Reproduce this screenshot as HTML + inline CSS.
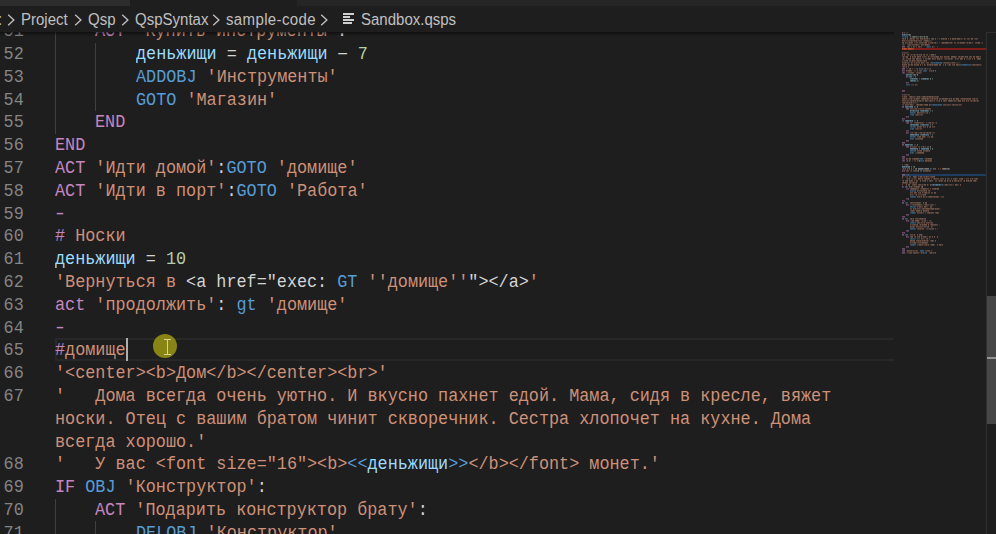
<!DOCTYPE html>
<html><head><meta charset="utf-8">
<style>
html,body{margin:0;padding:0;}
body{width:996px;height:534px;overflow:hidden;background:#1e1e1e;position:relative;font-family:"Liberation Sans",sans-serif;}
#tabs{position:absolute;left:0;top:0;width:996px;height:6px;background:#252526;}
#tabin{position:absolute;left:0;top:0;width:130px;height:6px;background:#2d2d2d;}
#tabact{position:absolute;left:130px;top:0;width:167px;height:6px;background:#1e1e1e;}
#crumbs{position:absolute;left:0;top:6px;width:996px;height:25.6px;background:#1e1e1e;z-index:5;}
.bc{position:absolute;top:0.5px;font-size:15.8px;transform:scaleX(0.95);transform-origin:0 0;line-height:25.6px;color:#c0c0c0;white-space:pre;}
.chev{position:absolute;top:7.6px;margin-left:-0.8px;}
#shadow{position:absolute;left:0;top:31.6px;width:894px;height:4px;background:linear-gradient(rgba(0,0,0,0.5),rgba(0,0,0,0));z-index:4;}
#editor{position:absolute;left:0;top:0;width:996px;height:534px;overflow:hidden;}
.ln{position:absolute;left:0;width:26.2px;text-align:right;transform:scaleX(0.9081);transform-origin:0 0;font-family:"Liberation Mono",monospace;font-size:18.5px;line-height:22.8px;height:22.8px;color:#858585;white-space:pre;}
.cl{position:absolute;transform:scaleX(0.9081);transform-origin:0 0;font-family:"Liberation Mono",monospace;font-size:18.5px;line-height:22.8px;height:22.8px;white-space:pre;}
.ig{position:absolute;width:1px;background:#404040;}
#curline{position:absolute;left:55px;top:338px;width:839px;height:23px;border:2px solid #282828;border-right:none;box-sizing:border-box;}
.dash{font-weight:normal;display:inline-block;transform:scaleX(1.38);}
#cursor{position:absolute;left:126px;top:338px;width:2px;height:23px;background:#aeafad;}
#mouse{position:absolute;left:153px;top:334px;width:24px;height:24px;border-radius:50%;background:#898515;}
#minimap{position:absolute;left:902px;top:0;width:84px;height:534px;}
#minimap i{position:absolute;height:2px;opacity:0.55;}
#vscroll{position:absolute;left:986px;top:32px;width:10px;height:502px;border-left:1px solid #303030;border-top:1px solid #303030;box-sizing:border-box;}
#slider{position:absolute;left:987px;top:296px;width:9px;height:128px;background:#464646;}
#marker{position:absolute;left:987px;top:356.5px;width:9px;height:2px;background:#939393;}
</style></head><body>
<div id="tabs"></div><div id="tabin"></div><div id="tabact"></div>
<div id="editor">
<div id="curline"></div>
<div class="ig" style="left:55.00px;top:31.60px;height:102.10px"></div>
<div class="ig" style="left:95.32px;top:42.50px;height:68.40px"></div>
<div class="ig" style="left:55.00px;top:498.50px;height:35.50px"></div>
<div class="ig" style="left:95.32px;top:521.30px;height:12.70px"></div>
<div class="ln" style="top:21px">51</div>
<div class="cl" style="top:21px;left:95.32px"><span style="color:#c586c0">ACT</span><span style="color:#d4d4d4"> </span><span style="color:#ce9178">&#x27;Купить инструменты&#x27;</span><span style="color:#d4d4d4">:</span></div>
<div class="ln" style="top:44px">52</div>
<div class="cl" style="top:44px;left:135.64px"><span style="color:#9cdcfe">деньжищи</span><span style="color:#d4d4d4"> = </span><span style="color:#9cdcfe">деньжищи</span><span style="color:#d4d4d4"> <b class="dash"><b class="dash">-</b></b> </span><span style="color:#b5cea8">7</span></div>
<div class="ln" style="top:67px">53</div>
<div class="cl" style="top:67px;left:135.64px"><span style="color:#569cd6">ADDOBJ</span><span style="color:#d4d4d4"> </span><span style="color:#ce9178">&#x27;Инструменты&#x27;</span></div>
<div class="ln" style="top:90px">54</div>
<div class="cl" style="top:90px;left:135.64px"><span style="color:#569cd6">GOTO</span><span style="color:#d4d4d4"> </span><span style="color:#ce9178">&#x27;Магазин&#x27;</span></div>
<div class="ln" style="top:112px">55</div>
<div class="cl" style="top:112px;left:95.32px"><span style="color:#c586c0">END</span></div>
<div class="ln" style="top:135px">56</div>
<div class="cl" style="top:135px;left:55.00px"><span style="color:#c586c0">END</span></div>
<div class="ln" style="top:158px">57</div>
<div class="cl" style="top:158px;left:55.00px"><span style="color:#c586c0">ACT</span><span style="color:#d4d4d4"> </span><span style="color:#ce9178">&#x27;Идти домой&#x27;</span><span style="color:#d4d4d4">:</span><span style="color:#569cd6">GOTO</span><span style="color:#d4d4d4"> </span><span style="color:#ce9178">&#x27;домище&#x27;</span></div>
<div class="ln" style="top:181px">58</div>
<div class="cl" style="top:181px;left:55.00px"><span style="color:#c586c0">ACT</span><span style="color:#d4d4d4"> </span><span style="color:#ce9178">&#x27;Идти в порт&#x27;</span><span style="color:#d4d4d4">:</span><span style="color:#569cd6">GOTO</span><span style="color:#d4d4d4"> </span><span style="color:#ce9178">&#x27;Работа&#x27;</span></div>
<div class="ln" style="top:204px">59</div>
<div class="cl" style="top:204px;left:55.00px"><span style="color:#c586c0"><b class="dash">-</b></span></div>
<div class="ln" style="top:226px">60</div>
<div class="cl" style="top:226px;left:55.00px"><span style="color:#c586c0">#</span><span style="color:#ce9178"> Носки</span></div>
<div class="ln" style="top:249px">61</div>
<div class="cl" style="top:249px;left:55.00px"><span style="color:#9cdcfe">деньжищи</span><span style="color:#d4d4d4"> = </span><span style="color:#b5cea8">10</span></div>
<div class="ln" style="top:272px">62</div>
<div class="cl" style="top:272px;left:55.00px"><span style="color:#ce9178">&#x27;Вернуться в </span><span style="color:#d4d4d4">&lt;a href=&quot;exec: </span><span style="color:#569cd6">GT</span><span style="color:#ce9178"> &#x27;&#x27;домище&#x27;&#x27;</span><span style="color:#d4d4d4">&quot;&gt;&lt;/a&gt;</span><span style="color:#ce9178">&#x27;</span></div>
<div class="ln" style="top:295px">63</div>
<div class="cl" style="top:295px;left:55.00px"><span style="color:#c586c0">act</span><span style="color:#d4d4d4"> </span><span style="color:#ce9178">&#x27;продолжить&#x27;</span><span style="color:#d4d4d4">: </span><span style="color:#569cd6">gt</span><span style="color:#d4d4d4"> </span><span style="color:#ce9178">&#x27;домище&#x27;</span></div>
<div class="ln" style="top:318px">64</div>
<div class="cl" style="top:318px;left:55.00px"><span style="color:#c586c0"><b class="dash">-</b></span></div>
<div class="ln" style="top:340px">65</div>
<div class="cl" style="top:340px;left:55.00px"><span style="color:#c586c0">#</span><span style="color:#ce9178">домище</span></div>
<div class="ln" style="top:363px">66</div>
<div class="cl" style="top:363px;left:55.00px"><span style="color:#ce9178">&#x27;&lt;center&gt;&lt;b&gt;Дом&lt;/b&gt;&lt;/center&gt;&lt;br&gt;&#x27;</span></div>
<div class="ln" style="top:386px">67</div>
<div class="cl" style="top:386px;left:55.00px"><span style="color:#ce9178">&#x27;   Дома всегда очень уютно. И вкусно пахнет едой. Мама, сидя в кресле, вяжет</span></div>
<div class="cl" style="top:409px;left:55.00px"><span style="color:#ce9178">носки. Отец с вашим братом чинит скворечник. Сестра хлопочет на кухне. Дома</span></div>
<div class="cl" style="top:432px;left:55.00px"><span style="color:#ce9178">всегда хорошо.&#x27;</span></div>
<div class="ln" style="top:454px">68</div>
<div class="cl" style="top:454px;left:55.00px"><span style="color:#ce9178">&#x27;   У вас &lt;font size=&quot;16&quot;&gt;&lt;b&gt;</span><span style="color:#569cd6">&lt;&lt;</span><span style="color:#9cdcfe">деньжищи</span><span style="color:#569cd6">&gt;&gt;</span><span style="color:#ce9178">&lt;/b&gt;&lt;/font&gt; монет.&#x27;</span></div>
<div class="ln" style="top:477px">69</div>
<div class="cl" style="top:477px;left:55.00px"><span style="color:#c586c0">IF</span><span style="color:#d4d4d4"> </span><span style="color:#569cd6">OBJ</span><span style="color:#d4d4d4"> </span><span style="color:#ce9178">&#x27;Конструктор&#x27;</span><span style="color:#d4d4d4">:</span></div>
<div class="ln" style="top:500px">70</div>
<div class="cl" style="top:500px;left:95.32px"><span style="color:#c586c0">ACT</span><span style="color:#d4d4d4"> </span><span style="color:#ce9178">&#x27;Подарить конструктор брату&#x27;</span><span style="color:#d4d4d4">:</span></div>
<div class="ln" style="top:523px">71</div>
<div class="cl" style="top:523px;left:135.64px"><span style="color:#569cd6">DELOBJ</span><span style="color:#d4d4d4"> </span><span style="color:#ce9178">&#x27;Конструктор&#x27;</span></div>
<div id="cursor"></div>
</div>
<div id="mouse"><svg width="24" height="24" viewBox="0 0 24 24" style="position:absolute;left:0;top:0"><path d="M11 5.5h7M14.5 5.5v15M11 20.5h7" stroke="#ddd38c" stroke-width="1" fill="none"/></svg></div>
<div id="minimap"><svg width="84" height="534" style="position:absolute;left:0;top:0">
<rect x="0" y="48.0" width="84" height="2" fill="#7f1d1b"/>
<rect x="0" y="174.0" width="84" height="2" fill="#1f3d62"/>
<path fill="#c586c0" fill-opacity="0.7" d="M0.0 32.2h0.90v1.4h-0.90zM0.0 46.2h0.90v1.4h-0.90zM1.0 46.2h0.90v1.4h-0.90zM2.0 46.2h0.90v1.4h-0.90zM0.0 52.2h0.72v1.4h-0.72zM0.0 68.2h0.90v1.4h-0.90zM1.0 68.2h0.90v1.4h-0.90zM2.0 68.2h0.90v1.4h-0.90zM0.0 70.2h0.90v1.4h-0.90zM1.0 72.2h0.90v1.4h-0.90zM4.0 76.2h0.90v1.4h-0.90zM5.0 76.2h0.63v1.4h-0.63zM4.0 82.2h0.90v1.4h-0.90zM0.0 90.2h0.90v1.4h-0.90zM1.0 90.2h0.90v1.4h-0.90zM2.0 90.2h0.90v1.4h-0.90zM0.0 94.2h0.72v1.4h-0.72zM0.0 106.2h0.90v1.4h-0.90zM1.0 106.2h0.90v1.4h-0.90zM4.0 108.2h0.90v1.4h-0.90zM5.0 108.2h0.90v1.4h-0.90zM6.0 108.2h0.90v1.4h-0.90zM4.0 116.2h0.90v1.4h-0.90zM6.0 116.2h0.90v1.4h-0.90zM0.0 118.2h0.90v1.4h-0.90zM5.0 122.2h0.90v1.4h-0.90zM6.0 122.2h0.90v1.4h-0.90zM4.0 132.2h0.90v1.4h-0.90zM4.0 140.2h0.90v1.4h-0.90zM6.0 140.2h0.90v1.4h-0.90zM0.0 142.2h0.90v1.4h-0.90zM1.0 142.2h0.90v1.4h-0.90zM2.0 142.2h0.90v1.4h-0.90zM0.0 144.2h0.90v1.4h-0.90zM1.0 144.2h0.90v1.4h-0.90zM4.0 146.2h0.90v1.4h-0.90zM5.0 146.2h0.90v1.4h-0.90zM6.0 146.2h0.90v1.4h-0.90zM4.0 154.2h0.90v1.4h-0.90zM6.0 154.2h0.90v1.4h-0.90zM0.0 156.2h0.90v1.4h-0.90zM1.0 156.2h0.90v1.4h-0.90zM2.0 156.2h0.90v1.4h-0.90zM1.0 158.2h0.90v1.4h-0.90zM1.0 160.2h0.90v1.4h-0.90zM0.0 170.2h0.90v1.4h-0.90zM2.0 170.2h0.90v1.4h-0.90zM0.0 174.2h0.90v1.4h-0.90zM0.0 186.2h0.90v1.4h-0.90zM6.0 198.2h0.90v1.4h-0.90zM0.0 202.2h0.90v1.4h-0.90zM1.0 202.2h0.90v1.4h-0.90zM4.0 204.2h0.90v1.4h-0.90zM4.0 214.2h0.90v1.4h-0.90zM6.0 214.2h0.90v1.4h-0.90zM1.0 216.2h0.90v1.4h-0.90zM2.0 216.2h0.90v1.4h-0.90zM0.0 218.2h0.90v1.4h-0.90zM1.0 218.2h0.90v1.4h-0.90zM4.0 220.2h0.90v1.4h-0.90zM6.0 220.2h0.90v1.4h-0.90zM5.0 230.2h0.90v1.4h-0.90zM6.0 230.2h0.90v1.4h-0.90zM0.0 232.2h0.90v1.4h-0.90zM2.0 232.2h0.90v1.4h-0.90zM0.0 234.2h0.90v1.4h-0.90zM1.0 234.2h0.90v1.4h-0.90zM4.0 236.2h0.90v1.4h-0.90zM4.0 246.2h0.90v1.4h-0.90zM6.0 246.2h0.90v1.4h-0.90zM0.0 248.2h0.90v1.4h-0.90zM1.0 248.2h0.90v1.4h-0.90zM2.0 248.2h0.90v1.4h-0.90zM1.0 250.2h0.90v1.4h-0.90zM2.0 250.2h0.90v1.4h-0.90zM0.0 252.2h0.90v1.4h-0.90zM1.0 252.2h0.90v1.4h-0.90zM2.0 252.2h0.90v1.4h-0.90z"/>
<path fill="#ce9178" fill-opacity="0.5" d="M1.6 32.2h0.90v1.4h-0.90zM0.0 38.2h0.90v1.4h-0.90zM10.0 38.2h0.90v1.4h-0.90zM12.0 38.2h0.90v1.4h-0.90zM14.0 38.2h0.90v1.4h-0.90zM15.0 38.2h0.90v1.4h-0.90zM16.0 38.2h0.90v1.4h-0.90zM19.0 38.2h0.90v1.4h-0.90zM23.0 38.2h0.90v1.4h-0.90zM24.0 38.2h0.90v1.4h-0.90zM27.0 38.2h0.90v1.4h-0.90zM29.0 38.2h0.90v1.4h-0.90zM37.0 38.2h0.90v1.4h-0.90zM40.0 38.2h0.90v1.4h-0.90zM42.0 38.2h0.90v1.4h-0.90zM43.0 38.2h0.90v1.4h-0.90zM46.0 38.2h0.90v1.4h-0.90zM52.0 38.2h0.90v1.4h-0.90zM59.0 38.2h0.90v1.4h-0.90zM65.0 38.2h0.90v1.4h-0.90zM66.0 38.2h0.90v1.4h-0.90zM67.0 38.2h0.90v1.4h-0.90zM73.0 38.2h0.90v1.4h-0.90zM74.0 38.2h0.90v1.4h-0.90zM75.0 38.2h0.90v1.4h-0.90zM1.0 40.2h0.90v1.4h-0.90zM2.0 40.2h0.90v1.4h-0.90zM4.0 40.2h0.90v1.4h-0.90zM6.0 40.2h0.90v1.4h-0.90zM7.0 40.2h0.90v1.4h-0.90zM8.0 40.2h0.90v1.4h-0.90zM10.0 40.2h0.90v1.4h-0.90zM11.0 40.2h0.90v1.4h-0.90zM13.0 40.2h0.90v1.4h-0.90zM16.0 40.2h0.90v1.4h-0.90zM17.0 40.2h0.90v1.4h-0.90zM18.0 40.2h0.90v1.4h-0.90zM19.0 40.2h0.90v1.4h-0.90zM22.0 40.2h0.90v1.4h-0.90zM26.0 40.2h0.90v1.4h-0.90zM29.0 40.2h0.54v1.4h-0.54zM0.0 42.2h0.90v1.4h-0.90zM5.0 42.2h0.90v1.4h-0.90zM8.0 42.2h0.90v1.4h-0.90zM10.0 42.2h0.90v1.4h-0.90zM14.0 42.2h0.90v1.4h-0.90zM15.0 42.2h0.90v1.4h-0.90zM17.0 42.2h0.90v1.4h-0.90zM18.0 42.2h0.90v1.4h-0.90zM19.0 42.2h0.90v1.4h-0.90zM22.0 42.2h0.90v1.4h-0.90zM26.0 42.2h0.90v1.4h-0.90zM28.0 42.2h0.90v1.4h-0.90zM29.0 42.2h0.90v1.4h-0.90zM32.0 42.2h0.90v1.4h-0.90zM42.0 42.2h0.90v1.4h-0.90zM46.0 42.2h0.90v1.4h-0.90zM47.0 42.2h0.90v1.4h-0.90zM48.0 42.2h0.90v1.4h-0.90zM52.0 42.2h0.90v1.4h-0.90zM53.0 42.2h0.90v1.4h-0.90zM55.0 42.2h0.90v1.4h-0.90zM56.0 42.2h0.90v1.4h-0.90zM59.0 42.2h0.90v1.4h-0.90zM62.0 42.2h0.90v1.4h-0.90zM70.0 42.2h0.90v1.4h-0.90zM73.0 42.2h0.90v1.4h-0.90zM74.0 42.2h0.90v1.4h-0.90zM75.0 42.2h0.90v1.4h-0.90zM80.0 42.2h0.63v1.4h-0.63zM1.0 44.2h0.90v1.4h-0.90zM6.0 44.2h0.90v1.4h-0.90zM8.0 44.2h0.90v1.4h-0.90zM10.0 44.2h0.90v1.4h-0.90zM11.0 44.2h0.90v1.4h-0.90zM12.0 44.2h0.90v1.4h-0.90zM13.0 44.2h0.90v1.4h-0.90zM15.0 44.2h0.90v1.4h-0.90zM16.0 44.2h0.90v1.4h-0.90zM20.0 44.2h0.90v1.4h-0.90zM21.0 44.2h0.90v1.4h-0.90zM26.0 44.2h0.90v1.4h-0.90zM27.0 44.2h0.90v1.4h-0.90zM5.0 46.2h0.90v1.4h-0.90zM7.0 46.2h0.90v1.4h-0.90zM9.0 46.2h0.90v1.4h-0.90zM12.0 46.2h0.90v1.4h-0.90zM14.0 46.2h0.90v1.4h-0.90zM16.0 46.2h0.90v1.4h-0.90zM19.0 46.2h0.90v1.4h-0.90zM2.6 52.2h0.90v1.4h-0.90zM5.0 54.2h0.90v1.4h-0.90zM9.0 54.2h0.90v1.4h-0.90zM17.0 54.2h0.90v1.4h-0.90zM18.0 54.2h0.90v1.4h-0.90zM21.0 54.2h0.90v1.4h-0.90zM24.0 54.2h0.90v1.4h-0.90zM25.0 54.2h0.90v1.4h-0.90zM12.0 56.2h0.90v1.4h-0.90zM17.0 56.2h0.90v1.4h-0.90zM20.0 56.2h0.90v1.4h-0.90zM22.0 56.2h0.90v1.4h-0.90zM23.0 56.2h0.90v1.4h-0.90zM29.0 56.2h0.90v1.4h-0.90zM30.0 56.2h0.90v1.4h-0.90zM31.0 56.2h0.90v1.4h-0.90zM32.0 56.2h0.90v1.4h-0.90zM33.0 56.2h0.90v1.4h-0.90zM39.0 56.2h0.90v1.4h-0.90zM40.0 56.2h0.90v1.4h-0.90zM43.0 56.2h0.90v1.4h-0.90zM44.0 56.2h0.90v1.4h-0.90zM45.0 56.2h0.90v1.4h-0.90zM56.0 56.2h0.90v1.4h-0.90zM61.0 56.2h0.90v1.4h-0.90zM64.0 56.2h0.90v1.4h-0.90zM67.0 56.2h0.90v1.4h-0.90zM69.0 56.2h0.90v1.4h-0.90zM78.0 56.2h0.90v1.4h-0.90zM4.0 58.2h0.90v1.4h-0.90zM6.0 58.2h0.90v1.4h-0.90zM7.0 58.2h0.90v1.4h-0.90zM10.0 58.2h0.90v1.4h-0.90zM12.0 58.2h0.90v1.4h-0.90zM16.0 58.2h0.90v1.4h-0.90zM17.0 58.2h0.90v1.4h-0.90zM18.0 58.2h0.90v1.4h-0.90zM21.0 58.2h0.90v1.4h-0.90zM23.0 58.2h0.90v1.4h-0.90zM24.0 58.2h0.90v1.4h-0.90zM28.0 58.2h0.90v1.4h-0.90zM31.0 58.2h0.90v1.4h-0.90zM32.0 58.2h0.90v1.4h-0.90zM33.0 58.2h0.90v1.4h-0.90zM36.0 58.2h0.90v1.4h-0.90zM39.0 58.2h0.90v1.4h-0.90zM43.0 58.2h0.90v1.4h-0.90zM44.0 58.2h0.90v1.4h-0.90zM46.0 58.2h0.90v1.4h-0.90zM50.0 58.2h0.90v1.4h-0.90zM55.0 58.2h0.90v1.4h-0.90zM56.0 58.2h0.90v1.4h-0.90zM60.0 58.2h0.90v1.4h-0.90zM67.0 58.2h0.90v1.4h-0.90zM68.0 58.2h0.90v1.4h-0.90zM70.0 58.2h0.90v1.4h-0.90zM78.0 58.2h0.90v1.4h-0.90zM0.0 60.2h0.90v1.4h-0.90zM2.0 60.2h0.90v1.4h-0.90zM3.0 60.2h0.90v1.4h-0.90zM4.0 60.2h0.90v1.4h-0.90zM7.0 60.2h0.90v1.4h-0.90zM8.0 60.2h0.90v1.4h-0.90zM11.0 60.2h0.90v1.4h-0.90zM17.0 60.2h0.90v1.4h-0.90zM19.0 60.2h0.90v1.4h-0.90zM21.0 60.2h0.90v1.4h-0.90zM23.0 60.2h0.90v1.4h-0.90zM24.0 60.2h0.90v1.4h-0.90zM0.0 62.2h0.90v1.4h-0.90zM1.0 62.2h0.90v1.4h-0.90zM2.0 62.2h0.90v1.4h-0.90zM5.0 62.2h0.90v1.4h-0.90zM6.0 62.2h0.90v1.4h-0.90zM10.0 62.2h0.90v1.4h-0.90zM12.0 62.2h0.90v1.4h-0.90zM16.0 62.2h0.90v1.4h-0.90zM17.0 62.2h0.90v1.4h-0.90zM20.0 62.2h0.90v1.4h-0.90zM21.0 62.2h0.90v1.4h-0.90zM24.0 62.2h0.90v1.4h-0.90zM25.0 62.2h0.90v1.4h-0.90zM26.0 62.2h0.90v1.4h-0.90zM41.4 62.2h0.90v1.4h-0.90zM43.4 62.2h0.90v1.4h-0.90zM44.4 62.2h0.90v1.4h-0.90zM46.4 62.2h0.90v1.4h-0.90zM47.4 62.2h0.90v1.4h-0.90zM49.4 62.2h0.90v1.4h-0.90zM51.4 62.2h0.90v1.4h-0.90zM55.4 62.2h0.90v1.4h-0.90zM1.0 64.2h0.90v1.4h-0.90zM3.0 64.2h0.90v1.4h-0.90zM7.0 64.2h0.90v1.4h-0.90zM13.0 64.2h0.90v1.4h-0.90zM14.0 64.2h0.90v1.4h-0.90zM20.0 64.2h0.90v1.4h-0.90zM26.0 64.2h0.90v1.4h-0.90zM27.0 64.2h0.90v1.4h-0.90zM29.0 64.2h0.90v1.4h-0.90zM41.0 64.2h0.90v1.4h-0.90zM48.0 64.2h0.90v1.4h-0.90zM50.0 64.2h0.90v1.4h-0.90zM51.0 64.2h0.90v1.4h-0.90zM56.0 64.2h0.90v1.4h-0.90zM57.0 64.2h0.90v1.4h-0.90zM70.4 64.2h0.90v1.4h-0.90zM76.4 64.2h0.90v1.4h-0.90zM77.4 64.2h0.90v1.4h-0.90zM78.4 64.2h0.90v1.4h-0.90zM2.0 66.2h0.90v1.4h-0.90zM10.3 68.2h0.90v1.4h-0.90zM14.3 68.2h0.90v1.4h-0.90zM25.4 68.2h0.90v1.4h-0.90zM27.4 68.2h0.90v1.4h-0.90zM28.4 68.2h0.54v1.4h-0.54zM5.3 70.2h0.90v1.4h-0.90zM9.3 70.2h0.90v1.4h-0.90zM12.3 70.2h0.90v1.4h-0.90zM17.3 70.2h0.90v1.4h-0.90zM27.0 70.2h0.90v1.4h-0.90zM6.3 72.2h0.90v1.4h-0.90zM7.3 72.2h0.90v1.4h-0.90zM8.3 72.2h0.90v1.4h-0.90zM11.3 72.2h0.90v1.4h-0.90zM14.3 72.2h0.90v1.4h-0.90zM15.3 72.2h0.90v1.4h-0.90zM16.3 72.2h0.90v1.4h-0.90zM18.3 72.2h0.90v1.4h-0.90zM10.8 84.2h0.90v1.4h-0.90zM12.8 84.2h0.90v1.4h-0.90zM13.8 84.2h0.90v1.4h-0.90zM2.6 94.2h0.90v1.4h-0.90zM6.6 94.2h0.90v1.4h-0.90zM0.0 96.2h0.90v1.4h-0.90zM3.0 96.2h0.90v1.4h-0.90zM7.0 96.2h0.90v1.4h-0.90zM10.0 96.2h0.90v1.4h-0.90zM11.0 96.2h0.90v1.4h-0.90zM12.0 96.2h0.90v1.4h-0.90zM16.0 96.2h0.90v1.4h-0.90zM20.0 96.2h0.90v1.4h-0.90zM23.0 96.2h0.90v1.4h-0.90zM24.0 96.2h0.90v1.4h-0.90zM26.0 96.2h0.90v1.4h-0.90zM29.0 96.2h0.90v1.4h-0.90zM31.0 96.2h0.90v1.4h-0.90zM32.0 96.2h0.90v1.4h-0.90zM33.0 96.2h0.90v1.4h-0.90zM34.0 96.2h0.90v1.4h-0.90zM36.0 96.2h0.72v1.4h-0.72zM0.0 98.2h0.90v1.4h-0.90zM3.0 98.2h0.90v1.4h-0.90zM4.0 98.2h0.90v1.4h-0.90zM7.0 98.2h0.90v1.4h-0.90zM8.0 98.2h0.90v1.4h-0.90zM16.0 98.2h0.90v1.4h-0.90zM17.0 98.2h0.90v1.4h-0.90zM19.0 98.2h0.90v1.4h-0.90zM24.0 98.2h0.90v1.4h-0.90zM26.0 98.2h0.90v1.4h-0.90zM28.0 98.2h0.90v1.4h-0.90zM29.0 98.2h0.90v1.4h-0.90zM33.0 98.2h0.90v1.4h-0.90zM34.0 98.2h0.90v1.4h-0.90zM38.0 98.2h0.90v1.4h-0.90zM42.0 98.2h0.90v1.4h-0.90zM45.0 98.2h0.90v1.4h-0.90zM52.0 98.2h0.90v1.4h-0.90zM59.0 98.2h0.90v1.4h-0.90zM61.0 98.2h0.90v1.4h-0.90zM63.0 98.2h0.90v1.4h-0.90zM64.0 98.2h0.90v1.4h-0.90zM66.0 98.2h0.90v1.4h-0.90zM70.0 98.2h0.90v1.4h-0.90zM71.0 98.2h0.90v1.4h-0.90zM74.0 98.2h0.90v1.4h-0.90zM75.0 98.2h0.90v1.4h-0.90zM1.0 100.2h0.90v1.4h-0.90zM2.0 100.2h0.90v1.4h-0.90zM3.0 100.2h0.90v1.4h-0.90zM5.0 100.2h0.90v1.4h-0.90zM6.0 100.2h0.90v1.4h-0.90zM8.0 100.2h0.90v1.4h-0.90zM10.0 100.2h0.90v1.4h-0.90zM12.0 100.2h0.90v1.4h-0.90zM16.0 100.2h0.90v1.4h-0.90zM17.0 100.2h0.90v1.4h-0.90zM20.0 100.2h0.90v1.4h-0.90zM21.0 100.2h0.90v1.4h-0.90zM25.0 100.2h0.90v1.4h-0.90zM27.0 100.2h0.90v1.4h-0.90zM29.0 100.2h0.90v1.4h-0.90zM30.0 100.2h0.90v1.4h-0.90zM32.0 100.2h0.90v1.4h-0.90zM35.0 100.2h0.90v1.4h-0.90zM41.0 100.2h0.90v1.4h-0.90zM43.0 100.2h0.90v1.4h-0.90zM44.0 100.2h0.90v1.4h-0.90zM46.0 100.2h0.90v1.4h-0.90zM50.0 100.2h0.90v1.4h-0.90zM52.0 100.2h0.90v1.4h-0.90zM53.0 100.2h0.90v1.4h-0.90zM68.0 100.2h0.90v1.4h-0.90zM71.0 100.2h0.90v1.4h-0.90zM73.0 100.2h0.90v1.4h-0.90zM8.0 102.2h0.90v1.4h-0.90zM11.0 102.2h0.90v1.4h-0.90zM1.0 104.2h0.90v1.4h-0.90zM4.0 104.2h0.90v1.4h-0.90zM5.0 104.2h0.90v1.4h-0.90zM6.0 104.2h0.90v1.4h-0.90zM10.0 104.2h0.90v1.4h-0.90zM14.0 104.2h0.90v1.4h-0.90zM17.0 104.2h0.90v1.4h-0.90zM20.0 104.2h0.90v1.4h-0.90zM22.0 104.2h0.90v1.4h-0.90zM42.4 104.2h0.90v1.4h-0.90zM45.4 104.2h0.90v1.4h-0.90zM48.4 104.2h0.90v1.4h-0.90zM54.4 104.2h0.90v1.4h-0.90zM55.4 104.2h0.90v1.4h-0.90zM58.4 104.2h0.90v1.4h-0.90zM9.4 108.2h0.90v1.4h-0.90zM10.4 108.2h0.90v1.4h-0.90zM12.4 108.2h0.90v1.4h-0.90zM19.4 108.2h0.90v1.4h-0.90zM25.4 108.2h0.90v1.4h-0.90zM28.4 108.2h0.54v1.4h-0.54zM17.0 112.2h0.90v1.4h-0.90zM18.0 112.2h0.90v1.4h-0.90zM19.0 112.2h0.90v1.4h-0.90zM20.0 112.2h0.90v1.4h-0.90zM21.0 112.2h0.90v1.4h-0.90zM27.0 112.2h0.72v1.4h-0.72zM13.4 114.2h0.90v1.4h-0.90zM17.4 114.2h0.90v1.4h-0.90zM20.4 114.2h0.54v1.4h-0.54zM8.4 122.2h0.90v1.4h-0.90zM9.4 122.2h0.90v1.4h-0.90zM12.4 122.2h0.90v1.4h-0.90zM13.4 122.2h0.90v1.4h-0.90zM16.4 122.2h0.90v1.4h-0.90zM17.4 122.2h0.90v1.4h-0.90zM18.4 122.2h0.90v1.4h-0.90zM19.4 122.2h0.90v1.4h-0.90zM20.4 122.2h0.90v1.4h-0.90zM24.4 122.2h0.90v1.4h-0.90zM26.4 122.2h0.90v1.4h-0.90zM28.4 122.2h0.90v1.4h-0.90zM16.0 126.2h0.90v1.4h-0.90zM17.0 126.2h0.90v1.4h-0.90zM19.0 126.2h0.90v1.4h-0.90zM23.0 126.2h0.90v1.4h-0.90zM27.0 126.2h0.90v1.4h-0.90zM30.0 126.2h0.90v1.4h-0.90zM13.4 128.2h0.90v1.4h-0.90zM14.4 128.2h0.90v1.4h-0.90zM9.4 132.2h0.90v1.4h-0.90zM10.4 132.2h0.90v1.4h-0.90zM12.4 132.2h0.90v1.4h-0.90zM31.4 132.2h0.90v1.4h-0.90zM32.4 132.2h0.36v1.4h-0.36zM15.0 136.2h0.90v1.4h-0.90zM16.0 136.2h0.90v1.4h-0.90zM27.0 136.2h0.90v1.4h-0.90zM14.4 138.2h0.90v1.4h-0.90zM15.4 138.2h0.90v1.4h-0.90zM17.4 138.2h0.90v1.4h-0.90zM10.0 146.2h0.90v1.4h-0.90zM11.0 146.2h0.90v1.4h-0.90zM12.0 146.2h0.90v1.4h-0.90zM13.0 146.2h0.90v1.4h-0.90zM14.0 146.2h0.90v1.4h-0.90zM17.0 146.2h0.90v1.4h-0.90zM19.0 146.2h0.90v1.4h-0.90zM23.0 146.2h0.90v1.4h-0.90zM25.0 146.2h0.90v1.4h-0.90zM26.0 146.2h0.90v1.4h-0.90zM16.0 150.2h0.90v1.4h-0.90zM17.0 150.2h0.90v1.4h-0.90zM22.0 150.2h0.90v1.4h-0.90zM23.0 150.2h0.90v1.4h-0.90zM26.0 150.2h0.90v1.4h-0.90zM15.0 152.2h0.90v1.4h-0.90zM5.0 158.2h0.90v1.4h-0.90zM10.0 158.2h0.90v1.4h-0.90zM11.0 158.2h0.90v1.4h-0.90zM23.0 158.2h0.90v1.4h-0.90zM25.0 158.2h0.90v1.4h-0.90zM13.0 160.2h0.90v1.4h-0.90zM15.0 160.2h0.90v1.4h-0.90zM25.0 160.2h0.90v1.4h-0.90zM27.0 160.2h0.90v1.4h-0.90zM29.0 160.2h0.90v1.4h-0.90zM3.0 164.2h0.90v1.4h-0.90zM11.0 168.2h0.90v1.4h-0.90zM32.0 168.2h0.90v1.4h-0.90zM36.0 168.2h0.90v1.4h-0.90zM38.0 168.2h0.90v1.4h-0.90zM47.0 168.2h0.90v1.4h-0.90zM4.0 170.2h0.90v1.4h-0.90zM6.0 170.2h0.90v1.4h-0.90zM9.0 170.2h0.90v1.4h-0.90zM11.0 170.2h0.90v1.4h-0.90zM12.0 170.2h0.90v1.4h-0.90zM14.0 170.2h0.90v1.4h-0.90zM15.0 170.2h0.90v1.4h-0.90zM22.0 170.2h0.90v1.4h-0.90zM23.0 170.2h0.90v1.4h-0.90zM26.0 170.2h0.90v1.4h-0.90zM28.0 170.2h0.90v1.4h-0.90zM6.0 174.2h0.90v1.4h-0.90zM5.0 176.2h0.90v1.4h-0.90zM7.0 176.2h0.90v1.4h-0.90zM8.0 176.2h0.90v1.4h-0.90zM14.0 176.2h0.90v1.4h-0.90zM16.0 176.2h0.90v1.4h-0.90zM25.0 176.2h0.90v1.4h-0.90zM26.0 176.2h0.90v1.4h-0.90zM28.0 176.2h0.90v1.4h-0.90zM29.0 176.2h0.90v1.4h-0.90zM5.0 178.2h0.90v1.4h-0.90zM10.0 178.2h0.90v1.4h-0.90zM12.0 178.2h0.90v1.4h-0.90zM13.0 178.2h0.90v1.4h-0.90zM18.0 178.2h0.90v1.4h-0.90zM22.0 178.2h0.90v1.4h-0.90zM25.0 178.2h0.90v1.4h-0.90zM27.0 178.2h0.90v1.4h-0.90zM29.0 178.2h0.90v1.4h-0.90zM33.0 178.2h0.90v1.4h-0.90zM34.0 178.2h0.90v1.4h-0.90zM35.0 178.2h0.90v1.4h-0.90zM36.0 178.2h0.90v1.4h-0.90zM38.0 178.2h0.90v1.4h-0.90zM39.0 178.2h0.90v1.4h-0.90zM40.0 178.2h0.90v1.4h-0.90zM41.0 178.2h0.90v1.4h-0.90zM45.0 178.2h0.90v1.4h-0.90zM46.0 178.2h0.90v1.4h-0.90zM49.0 178.2h0.90v1.4h-0.90zM51.0 178.2h0.90v1.4h-0.90zM52.0 178.2h0.90v1.4h-0.90zM54.0 178.2h0.90v1.4h-0.90zM57.0 178.2h0.90v1.4h-0.90zM58.0 178.2h0.90v1.4h-0.90zM64.0 178.2h0.90v1.4h-0.90zM66.0 178.2h0.90v1.4h-0.90zM68.0 178.2h0.90v1.4h-0.90zM72.0 178.2h0.90v1.4h-0.90zM73.0 178.2h0.90v1.4h-0.90zM75.0 178.2h0.90v1.4h-0.90zM3.0 180.2h0.90v1.4h-0.90zM8.0 180.2h0.90v1.4h-0.90zM10.0 180.2h0.90v1.4h-0.90zM12.0 180.2h0.90v1.4h-0.90zM15.0 180.2h0.90v1.4h-0.90zM20.0 180.2h0.90v1.4h-0.90zM21.0 180.2h0.90v1.4h-0.90zM22.0 180.2h0.90v1.4h-0.90zM25.0 180.2h0.90v1.4h-0.90zM27.0 180.2h0.90v1.4h-0.90zM29.0 180.2h0.90v1.4h-0.90zM30.0 180.2h0.90v1.4h-0.90zM33.0 180.2h0.90v1.4h-0.90zM34.0 180.2h0.90v1.4h-0.90zM38.0 180.2h0.90v1.4h-0.90zM40.0 180.2h0.90v1.4h-0.90zM42.0 180.2h0.90v1.4h-0.90zM54.0 180.2h0.90v1.4h-0.90zM58.0 180.2h0.90v1.4h-0.90zM59.0 180.2h0.90v1.4h-0.90zM65.0 180.2h0.90v1.4h-0.90zM71.0 180.2h0.90v1.4h-0.90zM0.0 182.2h0.90v1.4h-0.90zM2.0 182.2h0.90v1.4h-0.90zM5.0 182.2h0.90v1.4h-0.90zM7.0 182.2h0.90v1.4h-0.90zM10.0 182.2h0.90v1.4h-0.90zM12.0 182.2h0.90v1.4h-0.90zM13.0 182.2h0.90v1.4h-0.90zM0.0 184.2h0.90v1.4h-0.90zM10.0 184.2h0.90v1.4h-0.90zM11.0 184.2h0.90v1.4h-0.90zM13.0 184.2h0.90v1.4h-0.90zM14.0 184.2h0.90v1.4h-0.90zM16.0 184.2h0.90v1.4h-0.90zM18.0 184.2h0.90v1.4h-0.90zM19.0 184.2h0.90v1.4h-0.90zM20.0 184.2h0.90v1.4h-0.90zM45.0 184.2h0.90v1.4h-0.90zM47.0 184.2h0.90v1.4h-0.90zM48.0 184.2h0.90v1.4h-0.90zM49.0 184.2h0.90v1.4h-0.90zM55.0 184.2h0.90v1.4h-0.90zM12.0 186.2h0.90v1.4h-0.90zM13.0 186.2h0.90v1.4h-0.90zM17.0 186.2h0.90v1.4h-0.90zM19.0 186.2h0.90v1.4h-0.90zM8.0 188.2h0.90v1.4h-0.90zM14.0 188.2h0.90v1.4h-0.90zM15.0 188.2h0.90v1.4h-0.90zM16.0 188.2h0.90v1.4h-0.90zM19.0 188.2h0.90v1.4h-0.90zM20.0 188.2h0.90v1.4h-0.90zM23.0 188.2h0.90v1.4h-0.90zM24.0 188.2h0.90v1.4h-0.90zM25.0 188.2h0.90v1.4h-0.90zM26.0 188.2h0.90v1.4h-0.90zM28.0 188.2h0.90v1.4h-0.90zM30.0 188.2h0.90v1.4h-0.90zM31.0 188.2h0.90v1.4h-0.90zM34.0 188.2h0.90v1.4h-0.90zM17.0 190.2h0.90v1.4h-0.90zM18.0 190.2h0.90v1.4h-0.90zM19.0 190.2h0.90v1.4h-0.90zM20.0 190.2h0.90v1.4h-0.90zM21.0 190.2h0.90v1.4h-0.90zM23.0 190.2h0.90v1.4h-0.90zM26.0 190.2h0.90v1.4h-0.90zM8.0 192.2h0.90v1.4h-0.90zM9.0 192.2h0.90v1.4h-0.90zM10.0 192.2h0.90v1.4h-0.90zM14.0 192.2h0.90v1.4h-0.90zM16.0 192.2h0.90v1.4h-0.90zM17.0 192.2h0.90v1.4h-0.90zM20.0 192.2h0.90v1.4h-0.90zM22.0 192.2h0.90v1.4h-0.90zM26.0 192.2h0.90v1.4h-0.90zM27.0 192.2h0.90v1.4h-0.90zM29.0 192.2h0.90v1.4h-0.90zM30.0 192.2h0.90v1.4h-0.90zM10.0 194.2h0.90v1.4h-0.90zM16.0 194.2h0.90v1.4h-0.90zM19.0 194.2h0.90v1.4h-0.90zM22.0 194.2h0.90v1.4h-0.90zM16.2 196.2h0.90v1.4h-0.90zM22.2 196.2h0.90v1.4h-0.90zM24.2 196.2h0.90v1.4h-0.90zM26.2 196.2h0.90v1.4h-0.90zM30.2 196.2h0.90v1.4h-0.90zM31.2 196.2h0.90v1.4h-0.90zM33.2 196.2h0.90v1.4h-0.90zM36.2 196.2h0.90v1.4h-0.90zM40.2 196.2h0.90v1.4h-0.90zM41.2 196.2h0.90v1.4h-0.90zM8.0 202.2h0.90v1.4h-0.90zM10.0 202.2h0.90v1.4h-0.90zM11.0 202.2h0.90v1.4h-0.90zM12.0 202.2h0.90v1.4h-0.90zM13.0 202.2h0.90v1.4h-0.90zM14.0 202.2h0.90v1.4h-0.90zM16.0 202.2h0.90v1.4h-0.90zM18.0 202.2h0.90v1.4h-0.90zM8.4 204.2h0.90v1.4h-0.90zM10.4 204.2h0.90v1.4h-0.90zM11.4 204.2h0.90v1.4h-0.90zM12.4 204.2h0.90v1.4h-0.90zM14.4 204.2h0.90v1.4h-0.90zM18.4 204.2h0.90v1.4h-0.90zM19.4 204.2h0.90v1.4h-0.90zM22.4 204.2h0.90v1.4h-0.90zM26.4 204.2h0.90v1.4h-0.90zM29.4 204.2h0.90v1.4h-0.90zM30.4 204.2h0.90v1.4h-0.90zM33.4 204.2h0.54v1.4h-0.54zM20.2 206.2h0.90v1.4h-0.90zM8.0 208.2h0.90v1.4h-0.90zM9.0 208.2h0.90v1.4h-0.90zM15.0 208.2h0.90v1.4h-0.90zM16.0 208.2h0.90v1.4h-0.90zM17.0 208.2h0.90v1.4h-0.90zM20.0 208.2h0.90v1.4h-0.90zM22.0 208.2h0.90v1.4h-0.90zM23.0 208.2h0.90v1.4h-0.90zM27.0 208.2h0.90v1.4h-0.90zM28.0 208.2h0.90v1.4h-0.90zM34.0 208.2h0.90v1.4h-0.90zM36.0 208.2h0.90v1.4h-0.90zM12.0 210.2h0.90v1.4h-0.90zM23.0 210.2h0.90v1.4h-0.90zM25.0 210.2h0.90v1.4h-0.90zM16.2 212.2h0.90v1.4h-0.90zM17.2 212.2h0.90v1.4h-0.90zM18.2 212.2h0.90v1.4h-0.90zM21.2 212.2h0.90v1.4h-0.90zM23.2 212.2h0.90v1.4h-0.90zM25.2 212.2h0.90v1.4h-0.90zM28.2 212.2h0.90v1.4h-0.90zM31.2 212.2h0.90v1.4h-0.90zM33.2 212.2h0.90v1.4h-0.90zM36.2 212.2h0.90v1.4h-0.90zM8.0 218.2h0.90v1.4h-0.90zM13.0 218.2h0.90v1.4h-0.90zM14.0 218.2h0.90v1.4h-0.90zM17.0 218.2h0.90v1.4h-0.90zM19.0 218.2h0.90v1.4h-0.90zM21.0 218.2h0.90v1.4h-0.90zM22.0 218.2h0.90v1.4h-0.90zM20.0 220.2h0.90v1.4h-0.90zM22.0 220.2h0.90v1.4h-0.90zM28.0 220.2h0.90v1.4h-0.90zM17.2 222.2h0.90v1.4h-0.90zM19.2 222.2h0.90v1.4h-0.90zM20.2 222.2h0.90v1.4h-0.90zM25.2 222.2h0.90v1.4h-0.90zM28.2 222.2h0.90v1.4h-0.90zM30.2 222.2h0.90v1.4h-0.90zM8.0 224.2h0.90v1.4h-0.90zM10.0 224.2h0.90v1.4h-0.90zM11.0 224.2h0.90v1.4h-0.90zM13.0 224.2h0.90v1.4h-0.90zM14.0 224.2h0.90v1.4h-0.90zM21.0 224.2h0.90v1.4h-0.90zM31.0 224.2h0.90v1.4h-0.90zM32.0 224.2h0.90v1.4h-0.90zM34.0 224.2h0.90v1.4h-0.90zM35.0 224.2h0.90v1.4h-0.90zM9.0 226.2h0.90v1.4h-0.90zM10.0 226.2h0.90v1.4h-0.90zM12.0 226.2h0.90v1.4h-0.90zM15.0 226.2h0.90v1.4h-0.90zM16.0 226.2h0.90v1.4h-0.90zM17.0 226.2h0.90v1.4h-0.90zM18.0 226.2h0.90v1.4h-0.90zM19.0 226.2h0.90v1.4h-0.90zM20.0 226.2h0.90v1.4h-0.90zM22.0 226.2h0.90v1.4h-0.90zM23.0 226.2h0.90v1.4h-0.90zM25.0 226.2h0.90v1.4h-0.90zM29.0 226.2h0.90v1.4h-0.90zM15.2 228.2h0.90v1.4h-0.90zM17.2 228.2h0.90v1.4h-0.90zM21.2 228.2h0.90v1.4h-0.90zM25.2 228.2h0.90v1.4h-0.90zM27.2 228.2h0.90v1.4h-0.90zM28.2 228.2h0.90v1.4h-0.90zM29.2 228.2h0.90v1.4h-0.90zM30.2 228.2h0.90v1.4h-0.90zM33.2 228.2h0.90v1.4h-0.90zM8.0 234.2h0.90v1.4h-0.90zM9.0 234.2h0.90v1.4h-0.90zM10.0 234.2h0.90v1.4h-0.90zM20.0 234.2h0.54v1.4h-0.54zM8.0 236.2h0.90v1.4h-0.90zM15.0 236.2h0.90v1.4h-0.90zM16.0 236.2h0.90v1.4h-0.90zM21.0 236.2h0.90v1.4h-0.90zM28.0 236.2h0.90v1.4h-0.90zM15.2 238.2h0.90v1.4h-0.90zM24.2 238.2h0.90v1.4h-0.90zM27.2 238.2h0.54v1.4h-0.54zM10.0 240.2h0.90v1.4h-0.90zM14.0 240.2h0.90v1.4h-0.90zM15.0 240.2h0.90v1.4h-0.90zM17.0 240.2h0.90v1.4h-0.90zM21.0 240.2h0.90v1.4h-0.90zM23.0 240.2h0.90v1.4h-0.90zM24.0 240.2h0.90v1.4h-0.90zM31.0 240.2h0.90v1.4h-0.90zM10.0 242.2h0.90v1.4h-0.90zM11.0 242.2h0.90v1.4h-0.90zM16.0 242.2h0.90v1.4h-0.90zM17.0 242.2h0.90v1.4h-0.90zM18.0 242.2h0.90v1.4h-0.90zM19.0 242.2h0.90v1.4h-0.90zM22.0 242.2h0.90v1.4h-0.90zM25.0 242.2h0.90v1.4h-0.90zM15.2 244.2h0.90v1.4h-0.90zM19.2 244.2h0.90v1.4h-0.90zM20.2 244.2h0.90v1.4h-0.90zM22.2 244.2h0.90v1.4h-0.90zM23.2 244.2h0.90v1.4h-0.90zM39.2 244.2h0.90v1.4h-0.90zM40.2 244.2h0.90v1.4h-0.90zM6.8 250.2h0.90v1.4h-0.90zM7.8 250.2h0.90v1.4h-0.90zM10.8 250.2h0.90v1.4h-0.90zM11.8 250.2h0.90v1.4h-0.90zM14.8 250.2h0.90v1.4h-0.90zM23.3 250.2h0.90v1.4h-0.90zM24.3 250.2h0.90v1.4h-0.90zM25.3 250.2h0.90v1.4h-0.90zM27.3 250.2h0.90v1.4h-0.90zM29.3 250.2h0.90v1.4h-0.90zM4.8 252.2h0.90v1.4h-0.90zM6.8 252.2h0.90v1.4h-0.90zM10.8 252.2h0.90v1.4h-0.90zM13.8 252.2h0.90v1.4h-0.90zM15.8 252.2h0.90v1.4h-0.90zM31.0 252.2h0.90v1.4h-0.90z"/>
<path fill="#ce9178" fill-opacity="0.7" d="M2.6 32.2h0.36v1.4h-0.36zM1.0 38.2h0.90v1.4h-0.90zM3.0 38.2h0.90v1.4h-0.90zM5.0 38.2h0.90v1.4h-0.90zM8.0 38.2h0.90v1.4h-0.90zM9.0 38.2h0.90v1.4h-0.90zM11.0 38.2h0.90v1.4h-0.90zM18.0 38.2h0.90v1.4h-0.90zM20.0 38.2h0.90v1.4h-0.90zM22.0 38.2h0.90v1.4h-0.90zM25.0 38.2h0.90v1.4h-0.90zM30.0 38.2h0.90v1.4h-0.90zM31.0 38.2h0.90v1.4h-0.90zM33.0 38.2h0.90v1.4h-0.90zM39.0 38.2h0.90v1.4h-0.90zM41.0 38.2h0.90v1.4h-0.90zM44.0 38.2h0.90v1.4h-0.90zM48.0 38.2h0.90v1.4h-0.90zM50.0 38.2h0.90v1.4h-0.90zM51.0 38.2h0.90v1.4h-0.90zM53.0 38.2h0.90v1.4h-0.90zM55.0 38.2h0.90v1.4h-0.90zM56.0 38.2h0.90v1.4h-0.90zM57.0 38.2h0.90v1.4h-0.90zM62.0 38.2h0.90v1.4h-0.90zM69.0 38.2h0.90v1.4h-0.90zM70.0 38.2h0.90v1.4h-0.90zM0.0 40.2h0.90v1.4h-0.90zM9.0 40.2h0.90v1.4h-0.90zM12.0 40.2h0.90v1.4h-0.90zM14.0 40.2h0.90v1.4h-0.90zM23.0 40.2h0.90v1.4h-0.90zM24.0 40.2h0.90v1.4h-0.90zM25.0 40.2h0.90v1.4h-0.90zM1.0 42.2h0.90v1.4h-0.90zM3.0 42.2h0.90v1.4h-0.90zM7.0 42.2h0.90v1.4h-0.90zM9.0 42.2h0.90v1.4h-0.90zM20.0 42.2h0.90v1.4h-0.90zM23.0 42.2h0.90v1.4h-0.90zM24.0 42.2h0.90v1.4h-0.90zM30.0 42.2h0.90v1.4h-0.90zM33.0 42.2h0.90v1.4h-0.90zM40.0 42.2h0.90v1.4h-0.90zM41.0 42.2h0.90v1.4h-0.90zM43.0 42.2h0.90v1.4h-0.90zM44.0 42.2h0.90v1.4h-0.90zM45.0 42.2h0.90v1.4h-0.90zM49.0 42.2h0.90v1.4h-0.90zM58.0 42.2h0.90v1.4h-0.90zM60.0 42.2h0.90v1.4h-0.90zM61.0 42.2h0.90v1.4h-0.90zM65.0 42.2h0.90v1.4h-0.90zM67.0 42.2h0.90v1.4h-0.90zM68.0 42.2h0.90v1.4h-0.90zM76.0 42.2h0.90v1.4h-0.90zM77.0 42.2h0.90v1.4h-0.90zM7.0 44.2h0.90v1.4h-0.90zM14.0 44.2h0.90v1.4h-0.90zM19.0 44.2h0.90v1.4h-0.90zM23.0 44.2h0.90v1.4h-0.90zM24.0 44.2h0.90v1.4h-0.90zM25.0 44.2h0.90v1.4h-0.90zM6.0 46.2h0.90v1.4h-0.90zM11.0 46.2h0.90v1.4h-0.90zM17.0 46.2h0.90v1.4h-0.90zM30.0 46.2h0.90v1.4h-0.90zM1.6 52.2h0.90v1.4h-0.90zM4.6 52.2h0.90v1.4h-0.90zM6.6 52.2h0.36v1.4h-0.36zM0.0 54.2h0.90v1.4h-0.90zM2.0 54.2h0.90v1.4h-0.90zM6.0 54.2h0.90v1.4h-0.90zM12.0 54.2h0.90v1.4h-0.90zM15.0 54.2h0.90v1.4h-0.90zM19.0 54.2h0.90v1.4h-0.90zM22.0 54.2h0.90v1.4h-0.90zM29.0 54.2h0.90v1.4h-0.90zM30.0 54.2h0.90v1.4h-0.90zM31.0 54.2h0.90v1.4h-0.90zM33.0 54.2h0.63v1.4h-0.63zM1.0 56.2h0.90v1.4h-0.90zM4.0 56.2h0.90v1.4h-0.90zM5.0 56.2h0.90v1.4h-0.90zM8.0 56.2h0.90v1.4h-0.90zM10.0 56.2h0.90v1.4h-0.90zM13.0 56.2h0.90v1.4h-0.90zM15.0 56.2h0.90v1.4h-0.90zM16.0 56.2h0.90v1.4h-0.90zM18.0 56.2h0.90v1.4h-0.90zM26.0 56.2h0.90v1.4h-0.90zM34.0 56.2h0.90v1.4h-0.90zM35.0 56.2h0.90v1.4h-0.90zM36.0 56.2h0.90v1.4h-0.90zM38.0 56.2h0.90v1.4h-0.90zM42.0 56.2h0.90v1.4h-0.90zM46.0 56.2h0.90v1.4h-0.90zM49.0 56.2h0.90v1.4h-0.90zM50.0 56.2h0.90v1.4h-0.90zM51.0 56.2h0.90v1.4h-0.90zM52.0 56.2h0.90v1.4h-0.90zM53.0 56.2h0.90v1.4h-0.90zM57.0 56.2h0.90v1.4h-0.90zM59.0 56.2h0.90v1.4h-0.90zM60.0 56.2h0.90v1.4h-0.90zM63.0 56.2h0.90v1.4h-0.90zM65.0 56.2h0.90v1.4h-0.90zM68.0 56.2h0.90v1.4h-0.90zM71.0 56.2h0.90v1.4h-0.90zM72.0 56.2h0.90v1.4h-0.90zM74.0 56.2h0.90v1.4h-0.90zM75.0 56.2h0.90v1.4h-0.90zM76.0 56.2h0.90v1.4h-0.90zM1.0 58.2h0.90v1.4h-0.90zM8.0 58.2h0.90v1.4h-0.90zM11.0 58.2h0.90v1.4h-0.90zM14.0 58.2h0.90v1.4h-0.90zM15.0 58.2h0.90v1.4h-0.90zM26.0 58.2h0.90v1.4h-0.90zM27.0 58.2h0.90v1.4h-0.90zM30.0 58.2h0.90v1.4h-0.90zM35.0 58.2h0.90v1.4h-0.90zM37.0 58.2h0.90v1.4h-0.90zM47.0 58.2h0.90v1.4h-0.90zM49.0 58.2h0.90v1.4h-0.90zM53.0 58.2h0.90v1.4h-0.90zM58.0 58.2h0.90v1.4h-0.90zM59.0 58.2h0.90v1.4h-0.90zM62.0 58.2h0.90v1.4h-0.90zM72.0 58.2h0.90v1.4h-0.90zM75.0 58.2h0.90v1.4h-0.90zM76.0 58.2h0.90v1.4h-0.90zM77.0 58.2h0.90v1.4h-0.90zM5.0 60.2h0.90v1.4h-0.90zM10.0 60.2h0.90v1.4h-0.90zM12.0 60.2h0.90v1.4h-0.90zM15.0 60.2h0.90v1.4h-0.90zM16.0 60.2h0.90v1.4h-0.90zM18.0 60.2h0.90v1.4h-0.90zM22.0 60.2h0.90v1.4h-0.90zM3.0 62.2h0.90v1.4h-0.90zM9.0 62.2h0.90v1.4h-0.90zM14.0 62.2h0.90v1.4h-0.90zM19.0 62.2h0.90v1.4h-0.90zM42.4 62.2h0.90v1.4h-0.90zM45.4 62.2h0.90v1.4h-0.90zM50.4 62.2h0.90v1.4h-0.90zM52.4 62.2h0.90v1.4h-0.90zM0.0 64.2h0.90v1.4h-0.90zM2.0 64.2h0.90v1.4h-0.90zM4.0 64.2h0.90v1.4h-0.90zM6.0 64.2h0.90v1.4h-0.90zM9.0 64.2h0.90v1.4h-0.90zM10.0 64.2h0.90v1.4h-0.90zM12.0 64.2h0.90v1.4h-0.90zM15.0 64.2h0.90v1.4h-0.90zM16.0 64.2h0.90v1.4h-0.90zM18.0 64.2h0.90v1.4h-0.90zM22.0 64.2h0.90v1.4h-0.90zM25.0 64.2h0.90v1.4h-0.90zM28.0 64.2h0.90v1.4h-0.90zM30.0 64.2h0.90v1.4h-0.90zM32.0 64.2h0.90v1.4h-0.90zM33.0 64.2h0.90v1.4h-0.90zM34.0 64.2h0.90v1.4h-0.90zM35.0 64.2h0.90v1.4h-0.90zM37.0 64.2h0.90v1.4h-0.90zM38.0 64.2h0.90v1.4h-0.90zM43.0 64.2h0.90v1.4h-0.90zM47.0 64.2h0.90v1.4h-0.90zM52.0 64.2h0.90v1.4h-0.90zM54.0 64.2h0.90v1.4h-0.90zM55.0 64.2h0.90v1.4h-0.90zM71.4 64.2h0.90v1.4h-0.90zM72.4 64.2h0.90v1.4h-0.90zM74.4 64.2h0.90v1.4h-0.90zM75.4 64.2h0.90v1.4h-0.90zM1.0 66.2h0.90v1.4h-0.90zM4.0 66.2h0.72v1.4h-0.72zM7.3 68.2h0.90v1.4h-0.90zM8.3 68.2h0.90v1.4h-0.90zM15.3 68.2h0.63v1.4h-0.63zM22.4 68.2h0.90v1.4h-0.90zM23.4 68.2h0.90v1.4h-0.90zM4.3 70.2h0.90v1.4h-0.90zM6.3 70.2h0.90v1.4h-0.90zM7.3 70.2h0.90v1.4h-0.90zM8.3 70.2h0.90v1.4h-0.90zM15.3 70.2h0.90v1.4h-0.90zM18.3 70.2h0.90v1.4h-0.90zM19.3 70.2h0.36v1.4h-0.36zM29.0 70.2h0.90v1.4h-0.90zM31.0 70.2h0.90v1.4h-0.90zM33.0 70.2h0.90v1.4h-0.90zM9.3 72.2h0.90v1.4h-0.90zM10.3 72.2h0.90v1.4h-0.90zM17.3 72.2h0.90v1.4h-0.90zM19.3 72.2h0.36v1.4h-0.36zM1.6 94.2h0.90v1.4h-0.90zM3.6 94.2h0.90v1.4h-0.90zM5.6 94.2h0.90v1.4h-0.90zM2.0 96.2h0.90v1.4h-0.90zM4.0 96.2h0.90v1.4h-0.90zM8.0 96.2h0.90v1.4h-0.90zM9.0 96.2h0.90v1.4h-0.90zM15.0 96.2h0.90v1.4h-0.90zM17.0 96.2h0.90v1.4h-0.90zM21.0 96.2h0.90v1.4h-0.90zM22.0 96.2h0.90v1.4h-0.90zM25.0 96.2h0.90v1.4h-0.90zM27.0 96.2h0.90v1.4h-0.90zM28.0 96.2h0.90v1.4h-0.90zM30.0 96.2h0.90v1.4h-0.90zM35.0 96.2h0.90v1.4h-0.90zM1.0 98.2h0.90v1.4h-0.90zM2.0 98.2h0.90v1.4h-0.90zM9.0 98.2h0.90v1.4h-0.90zM12.0 98.2h0.90v1.4h-0.90zM14.0 98.2h0.90v1.4h-0.90zM15.0 98.2h0.90v1.4h-0.90zM20.0 98.2h0.90v1.4h-0.90zM21.0 98.2h0.90v1.4h-0.90zM22.0 98.2h0.90v1.4h-0.90zM23.0 98.2h0.90v1.4h-0.90zM25.0 98.2h0.90v1.4h-0.90zM30.0 98.2h0.90v1.4h-0.90zM32.0 98.2h0.90v1.4h-0.90zM35.0 98.2h0.90v1.4h-0.90zM37.0 98.2h0.90v1.4h-0.90zM40.0 98.2h0.90v1.4h-0.90zM41.0 98.2h0.90v1.4h-0.90zM43.0 98.2h0.90v1.4h-0.90zM44.0 98.2h0.90v1.4h-0.90zM47.0 98.2h0.90v1.4h-0.90zM49.0 98.2h0.90v1.4h-0.90zM51.0 98.2h0.90v1.4h-0.90zM54.0 98.2h0.90v1.4h-0.90zM55.0 98.2h0.90v1.4h-0.90zM56.0 98.2h0.90v1.4h-0.90zM60.0 98.2h0.90v1.4h-0.90zM62.0 98.2h0.90v1.4h-0.90zM65.0 98.2h0.90v1.4h-0.90zM67.0 98.2h0.90v1.4h-0.90zM68.0 98.2h0.90v1.4h-0.90zM72.0 98.2h0.90v1.4h-0.90zM0.0 100.2h0.90v1.4h-0.90zM9.0 100.2h0.90v1.4h-0.90zM11.0 100.2h0.90v1.4h-0.90zM13.0 100.2h0.90v1.4h-0.90zM15.0 100.2h0.90v1.4h-0.90zM18.0 100.2h0.90v1.4h-0.90zM23.0 100.2h0.90v1.4h-0.90zM24.0 100.2h0.90v1.4h-0.90zM28.0 100.2h0.90v1.4h-0.90zM37.0 100.2h0.90v1.4h-0.90zM39.0 100.2h0.90v1.4h-0.90zM42.0 100.2h0.90v1.4h-0.90zM47.0 100.2h0.90v1.4h-0.90zM48.0 100.2h0.90v1.4h-0.90zM49.0 100.2h0.90v1.4h-0.90zM56.0 100.2h0.90v1.4h-0.90zM57.0 100.2h0.90v1.4h-0.90zM58.0 100.2h0.90v1.4h-0.90zM60.0 100.2h0.90v1.4h-0.90zM62.0 100.2h0.90v1.4h-0.90zM64.0 100.2h0.90v1.4h-0.90zM66.0 100.2h0.90v1.4h-0.90zM69.0 100.2h0.90v1.4h-0.90zM72.0 100.2h0.90v1.4h-0.90zM75.0 100.2h0.90v1.4h-0.90zM76.0 100.2h0.54v1.4h-0.54zM1.0 102.2h0.90v1.4h-0.90zM2.0 102.2h0.90v1.4h-0.90zM4.0 102.2h0.90v1.4h-0.90zM5.0 102.2h0.90v1.4h-0.90zM7.0 102.2h0.90v1.4h-0.90zM9.0 102.2h0.90v1.4h-0.90zM3.0 104.2h0.90v1.4h-0.90zM8.0 104.2h0.90v1.4h-0.90zM9.0 104.2h0.90v1.4h-0.90zM15.0 104.2h0.90v1.4h-0.90zM16.0 104.2h0.90v1.4h-0.90zM18.0 104.2h0.90v1.4h-0.90zM19.0 104.2h0.90v1.4h-0.90zM23.0 104.2h0.90v1.4h-0.90zM24.0 104.2h0.90v1.4h-0.90zM25.0 104.2h0.90v1.4h-0.90zM27.0 104.2h0.90v1.4h-0.90zM28.0 104.2h0.63v1.4h-0.63zM41.4 104.2h0.90v1.4h-0.90zM43.4 104.2h0.90v1.4h-0.90zM46.4 104.2h0.90v1.4h-0.90zM50.4 104.2h0.90v1.4h-0.90zM51.4 104.2h0.90v1.4h-0.90zM53.4 104.2h0.90v1.4h-0.90zM57.4 104.2h0.90v1.4h-0.90zM8.4 108.2h0.90v1.4h-0.90zM13.4 108.2h0.90v1.4h-0.90zM14.4 108.2h0.90v1.4h-0.90zM16.4 108.2h0.90v1.4h-0.90zM18.4 108.2h0.90v1.4h-0.90zM21.4 108.2h0.90v1.4h-0.90zM23.4 108.2h0.90v1.4h-0.90zM24.4 108.2h0.90v1.4h-0.90zM26.4 108.2h0.90v1.4h-0.90zM27.4 108.2h0.90v1.4h-0.90zM15.0 112.2h0.90v1.4h-0.90zM16.0 112.2h0.90v1.4h-0.90zM25.0 112.2h0.90v1.4h-0.90zM14.4 114.2h0.90v1.4h-0.90zM15.4 114.2h0.90v1.4h-0.90zM19.4 114.2h0.90v1.4h-0.90zM14.4 122.2h0.90v1.4h-0.90zM15.4 122.2h0.90v1.4h-0.90zM27.4 122.2h0.90v1.4h-0.90zM30.4 122.2h0.90v1.4h-0.90zM34.4 122.2h0.54v1.4h-0.54zM15.0 126.2h0.90v1.4h-0.90zM18.0 126.2h0.90v1.4h-0.90zM21.0 126.2h0.90v1.4h-0.90zM25.0 126.2h0.90v1.4h-0.90zM28.0 126.2h0.90v1.4h-0.90zM32.0 126.2h0.72v1.4h-0.72zM15.4 128.2h0.90v1.4h-0.90zM18.4 128.2h0.90v1.4h-0.90zM13.4 132.2h0.90v1.4h-0.90zM14.4 132.2h0.90v1.4h-0.90zM18.4 132.2h0.90v1.4h-0.90zM19.4 132.2h0.90v1.4h-0.90zM21.4 132.2h0.90v1.4h-0.90zM22.4 132.2h0.90v1.4h-0.90zM24.4 132.2h0.90v1.4h-0.90zM25.4 132.2h0.90v1.4h-0.90zM27.4 132.2h0.90v1.4h-0.90zM28.4 132.2h0.90v1.4h-0.90zM17.0 136.2h0.90v1.4h-0.90zM18.0 136.2h0.90v1.4h-0.90zM20.0 136.2h0.90v1.4h-0.90zM21.0 136.2h0.90v1.4h-0.90zM22.0 136.2h0.90v1.4h-0.90zM29.0 136.2h0.90v1.4h-0.90zM30.0 136.2h0.90v1.4h-0.90zM13.4 138.2h0.90v1.4h-0.90zM16.4 138.2h0.90v1.4h-0.90zM18.4 138.2h0.90v1.4h-0.90zM19.4 138.2h0.90v1.4h-0.90zM20.4 138.2h0.54v1.4h-0.54zM8.0 146.2h0.90v1.4h-0.90zM21.0 146.2h0.90v1.4h-0.90zM15.0 150.2h0.90v1.4h-0.90zM18.0 150.2h0.90v1.4h-0.90zM19.0 150.2h0.90v1.4h-0.90zM21.0 150.2h0.90v1.4h-0.90zM24.0 150.2h0.90v1.4h-0.90zM25.0 150.2h0.90v1.4h-0.90zM27.0 150.2h0.90v1.4h-0.90zM16.0 152.2h0.90v1.4h-0.90zM17.0 152.2h0.90v1.4h-0.90zM18.0 152.2h0.90v1.4h-0.90zM19.0 152.2h0.90v1.4h-0.90zM20.0 152.2h0.90v1.4h-0.90zM21.0 152.2h0.90v1.4h-0.90zM4.0 158.2h0.90v1.4h-0.90zM7.0 158.2h0.90v1.4h-0.90zM8.0 158.2h0.90v1.4h-0.90zM12.0 158.2h0.90v1.4h-0.90zM13.0 158.2h0.90v1.4h-0.90zM14.0 158.2h0.90v1.4h-0.90zM15.0 158.2h0.90v1.4h-0.90zM24.0 158.2h0.90v1.4h-0.90zM26.0 158.2h0.90v1.4h-0.90zM27.0 158.2h0.90v1.4h-0.90zM28.0 158.2h0.90v1.4h-0.90zM29.0 158.2h0.90v1.4h-0.90zM5.0 160.2h0.90v1.4h-0.90zM7.0 160.2h0.90v1.4h-0.90zM23.0 160.2h0.90v1.4h-0.90zM24.0 160.2h0.90v1.4h-0.90zM26.0 160.2h0.90v1.4h-0.90zM28.0 160.2h0.90v1.4h-0.90zM4.0 164.2h0.90v1.4h-0.90zM5.0 164.2h0.90v1.4h-0.90zM1.0 168.2h0.90v1.4h-0.90zM3.0 168.2h0.90v1.4h-0.90zM5.0 168.2h0.90v1.4h-0.90zM7.0 168.2h0.90v1.4h-0.90zM9.0 168.2h0.90v1.4h-0.90zM31.0 168.2h0.90v1.4h-0.90zM33.0 168.2h0.90v1.4h-0.90zM40.0 168.2h0.90v1.4h-0.90zM5.0 170.2h0.90v1.4h-0.90zM13.0 170.2h0.90v1.4h-0.90zM21.0 170.2h0.90v1.4h-0.90zM24.0 170.2h0.90v1.4h-0.90zM25.0 170.2h0.90v1.4h-0.90zM27.0 170.2h0.90v1.4h-0.90zM1.0 174.2h0.90v1.4h-0.90zM2.0 174.2h0.90v1.4h-0.90zM0.0 176.2h0.90v1.4h-0.90zM11.0 176.2h0.90v1.4h-0.90zM12.0 176.2h0.90v1.4h-0.90zM13.0 176.2h0.90v1.4h-0.90zM18.0 176.2h0.90v1.4h-0.90zM19.0 176.2h0.90v1.4h-0.90zM22.0 176.2h0.90v1.4h-0.90zM24.0 176.2h0.90v1.4h-0.90zM30.0 176.2h0.90v1.4h-0.90zM31.0 176.2h0.90v1.4h-0.90zM32.0 176.2h0.90v1.4h-0.90zM7.0 178.2h0.90v1.4h-0.90zM16.0 178.2h0.90v1.4h-0.90zM17.0 178.2h0.90v1.4h-0.90zM20.0 178.2h0.90v1.4h-0.90zM23.0 178.2h0.90v1.4h-0.90zM24.0 178.2h0.90v1.4h-0.90zM26.0 178.2h0.90v1.4h-0.90zM32.0 178.2h0.90v1.4h-0.90zM43.0 178.2h0.90v1.4h-0.90zM53.0 178.2h0.90v1.4h-0.90zM59.0 178.2h0.90v1.4h-0.90zM60.0 178.2h0.90v1.4h-0.90zM70.0 178.2h0.90v1.4h-0.90zM74.0 178.2h0.90v1.4h-0.90zM1.0 180.2h0.90v1.4h-0.90zM4.0 180.2h0.90v1.4h-0.90zM5.0 180.2h0.90v1.4h-0.90zM7.0 180.2h0.90v1.4h-0.90zM9.0 180.2h0.90v1.4h-0.90zM14.0 180.2h0.90v1.4h-0.90zM18.0 180.2h0.90v1.4h-0.90zM23.0 180.2h0.90v1.4h-0.90zM28.0 180.2h0.90v1.4h-0.90zM37.0 180.2h0.90v1.4h-0.90zM39.0 180.2h0.90v1.4h-0.90zM43.0 180.2h0.90v1.4h-0.90zM45.0 180.2h0.90v1.4h-0.90zM48.0 180.2h0.90v1.4h-0.90zM50.0 180.2h0.90v1.4h-0.90zM52.0 180.2h0.90v1.4h-0.90zM53.0 180.2h0.90v1.4h-0.90zM56.0 180.2h0.90v1.4h-0.90zM62.0 180.2h0.90v1.4h-0.90zM64.0 180.2h0.90v1.4h-0.90zM66.0 180.2h0.90v1.4h-0.90zM68.0 180.2h0.90v1.4h-0.90zM69.0 180.2h0.90v1.4h-0.90zM72.0 180.2h0.90v1.4h-0.90zM73.0 180.2h0.90v1.4h-0.90zM1.0 182.2h0.90v1.4h-0.90zM3.0 182.2h0.90v1.4h-0.90zM4.0 182.2h0.90v1.4h-0.90zM8.0 182.2h0.90v1.4h-0.90zM11.0 182.2h0.90v1.4h-0.90zM14.0 182.2h0.90v1.4h-0.90zM4.0 184.2h0.90v1.4h-0.90zM6.0 184.2h0.90v1.4h-0.90zM7.0 184.2h0.90v1.4h-0.90zM12.0 184.2h0.90v1.4h-0.90zM17.0 184.2h0.90v1.4h-0.90zM22.0 184.2h0.90v1.4h-0.90zM23.0 184.2h0.90v1.4h-0.90zM25.0 184.2h0.90v1.4h-0.90zM28.0 184.2h0.90v1.4h-0.90zM43.0 184.2h0.90v1.4h-0.90zM44.0 184.2h0.90v1.4h-0.90zM53.0 184.2h0.90v1.4h-0.90zM54.0 184.2h0.90v1.4h-0.90zM58.0 184.2h0.90v1.4h-0.90zM7.0 186.2h0.90v1.4h-0.90zM9.0 186.2h0.90v1.4h-0.90zM14.0 186.2h0.90v1.4h-0.90zM15.0 186.2h0.90v1.4h-0.90zM16.0 186.2h0.90v1.4h-0.90zM9.0 188.2h0.90v1.4h-0.90zM10.0 188.2h0.90v1.4h-0.90zM11.0 188.2h0.90v1.4h-0.90zM12.0 188.2h0.90v1.4h-0.90zM13.0 188.2h0.90v1.4h-0.90zM21.0 188.2h0.90v1.4h-0.90zM22.0 188.2h0.90v1.4h-0.90zM32.0 188.2h0.90v1.4h-0.90zM33.0 188.2h0.90v1.4h-0.90zM35.0 188.2h0.90v1.4h-0.90zM15.0 190.2h0.90v1.4h-0.90zM22.0 190.2h0.90v1.4h-0.90zM24.0 190.2h0.90v1.4h-0.90zM27.0 190.2h0.90v1.4h-0.90zM12.0 192.2h0.90v1.4h-0.90zM13.0 192.2h0.90v1.4h-0.90zM18.0 192.2h0.90v1.4h-0.90zM23.0 192.2h0.90v1.4h-0.90zM24.0 192.2h0.90v1.4h-0.90zM32.0 192.2h0.90v1.4h-0.90zM33.0 192.2h0.90v1.4h-0.90zM8.0 194.2h0.90v1.4h-0.90zM14.0 194.2h0.90v1.4h-0.90zM21.0 194.2h0.90v1.4h-0.90zM23.0 194.2h0.90v1.4h-0.90zM15.2 196.2h0.90v1.4h-0.90zM17.2 196.2h0.90v1.4h-0.90zM19.2 196.2h0.90v1.4h-0.90zM21.2 196.2h0.90v1.4h-0.90zM27.2 196.2h0.90v1.4h-0.90zM28.2 196.2h0.90v1.4h-0.90zM29.2 196.2h0.90v1.4h-0.90zM32.2 196.2h0.90v1.4h-0.90zM34.2 196.2h0.90v1.4h-0.90zM35.2 196.2h0.90v1.4h-0.90zM9.0 202.2h0.90v1.4h-0.90zM15.0 202.2h0.90v1.4h-0.90zM17.0 202.2h0.90v1.4h-0.90zM21.0 202.2h0.90v1.4h-0.90zM23.0 202.2h0.90v1.4h-0.90zM24.0 202.2h0.90v1.4h-0.90zM13.4 204.2h0.90v1.4h-0.90zM15.4 204.2h0.90v1.4h-0.90zM16.4 204.2h0.90v1.4h-0.90zM17.4 204.2h0.90v1.4h-0.90zM23.4 204.2h0.90v1.4h-0.90zM24.4 204.2h0.90v1.4h-0.90zM28.4 204.2h0.90v1.4h-0.90zM15.2 206.2h0.90v1.4h-0.90zM17.2 206.2h0.90v1.4h-0.90zM18.2 206.2h0.90v1.4h-0.90zM22.2 206.2h0.90v1.4h-0.90zM23.2 206.2h0.90v1.4h-0.90zM28.2 206.2h0.90v1.4h-0.90zM29.2 206.2h0.90v1.4h-0.90zM11.0 208.2h0.90v1.4h-0.90zM13.0 208.2h0.90v1.4h-0.90zM21.0 208.2h0.90v1.4h-0.90zM24.0 208.2h0.90v1.4h-0.90zM25.0 208.2h0.90v1.4h-0.90zM26.0 208.2h0.90v1.4h-0.90zM29.0 208.2h0.90v1.4h-0.90zM30.0 208.2h0.90v1.4h-0.90zM31.0 208.2h0.90v1.4h-0.90zM33.0 208.2h0.90v1.4h-0.90zM35.0 208.2h0.90v1.4h-0.90zM9.0 210.2h0.90v1.4h-0.90zM10.0 210.2h0.90v1.4h-0.90zM11.0 210.2h0.90v1.4h-0.90zM14.0 210.2h0.90v1.4h-0.90zM15.0 210.2h0.90v1.4h-0.90zM16.0 210.2h0.90v1.4h-0.90zM17.0 210.2h0.90v1.4h-0.90zM19.0 210.2h0.90v1.4h-0.90zM21.0 210.2h0.90v1.4h-0.90zM22.0 210.2h0.90v1.4h-0.90zM24.0 210.2h0.90v1.4h-0.90zM26.0 210.2h0.90v1.4h-0.90zM15.2 212.2h0.90v1.4h-0.90zM19.2 212.2h0.90v1.4h-0.90zM26.2 212.2h0.90v1.4h-0.90zM27.2 212.2h0.90v1.4h-0.90zM29.2 212.2h0.90v1.4h-0.90zM30.2 212.2h0.90v1.4h-0.90zM34.2 212.2h0.90v1.4h-0.90zM35.2 212.2h0.90v1.4h-0.90zM9.0 218.2h0.90v1.4h-0.90zM11.0 218.2h0.90v1.4h-0.90zM15.0 218.2h0.90v1.4h-0.90zM18.0 218.2h0.90v1.4h-0.90zM20.0 218.2h0.90v1.4h-0.90zM23.0 218.2h0.90v1.4h-0.90zM10.0 220.2h0.90v1.4h-0.90zM11.0 220.2h0.90v1.4h-0.90zM13.0 220.2h0.90v1.4h-0.90zM14.0 220.2h0.90v1.4h-0.90zM15.0 220.2h0.90v1.4h-0.90zM16.0 220.2h0.90v1.4h-0.90zM23.0 220.2h0.90v1.4h-0.90zM15.2 222.2h0.90v1.4h-0.90zM16.2 222.2h0.90v1.4h-0.90zM22.2 222.2h0.90v1.4h-0.90zM24.2 222.2h0.90v1.4h-0.90zM26.2 222.2h0.90v1.4h-0.90zM29.2 222.2h0.90v1.4h-0.90zM12.0 224.2h0.90v1.4h-0.90zM15.0 224.2h0.90v1.4h-0.90zM18.0 224.2h0.90v1.4h-0.90zM20.0 224.2h0.90v1.4h-0.90zM22.0 224.2h0.90v1.4h-0.90zM23.0 224.2h0.90v1.4h-0.90zM24.0 224.2h0.90v1.4h-0.90zM26.0 224.2h0.90v1.4h-0.90zM29.0 224.2h0.90v1.4h-0.90zM30.0 224.2h0.90v1.4h-0.90zM33.0 224.2h0.90v1.4h-0.90zM8.0 226.2h0.90v1.4h-0.90zM11.0 226.2h0.90v1.4h-0.90zM14.0 226.2h0.90v1.4h-0.90zM26.0 226.2h0.90v1.4h-0.90zM30.0 226.2h0.45v1.4h-0.45zM16.2 228.2h0.90v1.4h-0.90zM18.2 228.2h0.90v1.4h-0.90zM20.2 228.2h0.90v1.4h-0.90zM31.2 228.2h0.90v1.4h-0.90zM12.0 234.2h0.90v1.4h-0.90zM15.0 234.2h0.90v1.4h-0.90zM17.0 234.2h0.90v1.4h-0.90zM18.0 234.2h0.90v1.4h-0.90zM19.0 234.2h0.90v1.4h-0.90zM9.0 236.2h0.90v1.4h-0.90zM10.0 236.2h0.90v1.4h-0.90zM13.0 236.2h0.90v1.4h-0.90zM17.0 236.2h0.90v1.4h-0.90zM19.0 236.2h0.90v1.4h-0.90zM22.0 236.2h0.90v1.4h-0.90zM23.0 236.2h0.90v1.4h-0.90zM27.0 236.2h0.90v1.4h-0.90zM30.0 236.2h0.90v1.4h-0.90zM32.0 236.2h0.90v1.4h-0.90zM35.0 236.2h0.90v1.4h-0.90zM19.2 238.2h0.90v1.4h-0.90zM25.2 238.2h0.90v1.4h-0.90zM8.0 240.2h0.90v1.4h-0.90zM9.0 240.2h0.90v1.4h-0.90zM11.0 240.2h0.90v1.4h-0.90zM12.0 240.2h0.90v1.4h-0.90zM16.0 240.2h0.90v1.4h-0.90zM18.0 240.2h0.90v1.4h-0.90zM20.0 240.2h0.90v1.4h-0.90zM22.0 240.2h0.90v1.4h-0.90zM25.0 240.2h0.90v1.4h-0.90zM29.0 240.2h0.90v1.4h-0.90zM30.0 240.2h0.90v1.4h-0.90zM33.0 240.2h0.90v1.4h-0.90zM8.0 242.2h0.90v1.4h-0.90zM12.0 242.2h0.90v1.4h-0.90zM13.0 242.2h0.90v1.4h-0.90zM20.0 242.2h0.90v1.4h-0.90zM21.0 242.2h0.90v1.4h-0.90zM23.0 242.2h0.90v1.4h-0.90zM24.0 242.2h0.90v1.4h-0.90zM17.2 244.2h0.90v1.4h-0.90zM18.2 244.2h0.90v1.4h-0.90zM24.2 244.2h0.90v1.4h-0.90zM26.2 244.2h0.90v1.4h-0.90zM29.2 244.2h0.90v1.4h-0.90zM30.2 244.2h0.90v1.4h-0.90zM31.2 244.2h0.90v1.4h-0.90zM35.2 244.2h0.90v1.4h-0.90zM37.2 244.2h0.90v1.4h-0.90zM38.2 244.2h0.90v1.4h-0.90zM4.8 250.2h0.90v1.4h-0.90zM5.8 250.2h0.90v1.4h-0.90zM8.8 250.2h0.90v1.4h-0.90zM13.8 250.2h0.90v1.4h-0.90zM26.3 250.2h0.90v1.4h-0.90zM7.8 252.2h0.90v1.4h-0.90zM8.8 252.2h0.90v1.4h-0.90zM11.8 252.2h0.90v1.4h-0.90zM12.8 252.2h0.90v1.4h-0.90zM14.8 252.2h0.90v1.4h-0.90zM18.8 252.2h0.90v1.4h-0.90zM19.8 252.2h0.72v1.4h-0.72zM28.0 252.2h0.90v1.4h-0.90zM29.0 252.2h0.90v1.4h-0.90zM33.0 252.2h0.90v1.4h-0.90z"/>
<path fill="#ce9178" fill-opacity="0.3" d="M4.0 32.2h0.90v1.4h-0.90zM5.0 32.2h0.90v1.4h-0.90zM2.0 38.2h0.90v1.4h-0.90zM7.0 38.2h0.90v1.4h-0.90zM21.0 38.2h0.90v1.4h-0.90zM26.0 38.2h0.90v1.4h-0.90zM35.0 38.2h0.90v1.4h-0.90zM54.0 38.2h0.90v1.4h-0.90zM58.0 38.2h0.90v1.4h-0.90zM60.0 38.2h0.90v1.4h-0.90zM63.0 38.2h0.90v1.4h-0.90zM72.0 38.2h0.90v1.4h-0.90zM3.0 40.2h0.90v1.4h-0.90zM5.0 40.2h0.90v1.4h-0.90zM15.0 40.2h0.90v1.4h-0.90zM21.0 40.2h0.90v1.4h-0.90zM27.0 40.2h0.90v1.4h-0.90zM28.0 40.2h0.90v1.4h-0.90zM4.0 42.2h0.90v1.4h-0.90zM6.0 42.2h0.90v1.4h-0.90zM12.0 42.2h0.90v1.4h-0.90zM13.0 42.2h0.90v1.4h-0.90zM21.0 42.2h0.90v1.4h-0.90zM27.0 42.2h0.90v1.4h-0.90zM31.0 42.2h0.90v1.4h-0.90zM34.0 42.2h0.90v1.4h-0.90zM35.0 42.2h0.90v1.4h-0.90zM37.0 42.2h0.90v1.4h-0.90zM39.0 42.2h0.90v1.4h-0.90zM50.0 42.2h0.90v1.4h-0.90zM57.0 42.2h0.90v1.4h-0.90zM63.0 42.2h0.90v1.4h-0.90zM64.0 42.2h0.90v1.4h-0.90zM66.0 42.2h0.90v1.4h-0.90zM69.0 42.2h0.90v1.4h-0.90zM79.0 42.2h0.90v1.4h-0.90zM0.0 44.2h0.90v1.4h-0.90zM2.0 44.2h0.90v1.4h-0.90zM5.0 44.2h0.90v1.4h-0.90zM9.0 44.2h0.90v1.4h-0.90zM17.0 44.2h0.90v1.4h-0.90zM22.0 44.2h0.90v1.4h-0.90zM18.0 46.2h0.90v1.4h-0.90zM31.0 46.2h0.90v1.4h-0.90zM32.0 46.2h0.90v1.4h-0.90zM35.0 46.2h0.90v1.4h-0.90zM3.6 52.2h0.90v1.4h-0.90zM1.0 54.2h0.90v1.4h-0.90zM8.0 54.2h0.90v1.4h-0.90zM10.0 54.2h0.90v1.4h-0.90zM11.0 54.2h0.90v1.4h-0.90zM13.0 54.2h0.90v1.4h-0.90zM14.0 54.2h0.90v1.4h-0.90zM16.0 54.2h0.90v1.4h-0.90zM27.0 54.2h0.90v1.4h-0.90zM28.0 54.2h0.90v1.4h-0.90zM32.0 54.2h0.90v1.4h-0.90zM0.0 56.2h0.90v1.4h-0.90zM2.0 56.2h0.90v1.4h-0.90zM3.0 56.2h0.90v1.4h-0.90zM11.0 56.2h0.90v1.4h-0.90zM21.0 56.2h0.90v1.4h-0.90zM24.0 56.2h0.90v1.4h-0.90zM27.0 56.2h0.90v1.4h-0.90zM28.0 56.2h0.90v1.4h-0.90zM47.0 56.2h0.90v1.4h-0.90zM54.0 56.2h0.90v1.4h-0.90zM58.0 56.2h0.90v1.4h-0.90zM62.0 56.2h0.90v1.4h-0.90zM77.0 56.2h0.90v1.4h-0.90zM0.0 58.2h0.90v1.4h-0.90zM2.0 58.2h0.90v1.4h-0.90zM5.0 58.2h0.90v1.4h-0.90zM19.0 58.2h0.90v1.4h-0.90zM25.0 58.2h0.90v1.4h-0.90zM38.0 58.2h0.90v1.4h-0.90zM40.0 58.2h0.90v1.4h-0.90zM42.0 58.2h0.90v1.4h-0.90zM45.0 58.2h0.90v1.4h-0.90zM48.0 58.2h0.90v1.4h-0.90zM54.0 58.2h0.90v1.4h-0.90zM64.0 58.2h0.90v1.4h-0.90zM65.0 58.2h0.90v1.4h-0.90zM66.0 58.2h0.90v1.4h-0.90zM1.0 60.2h0.90v1.4h-0.90zM9.0 60.2h0.90v1.4h-0.90zM13.0 60.2h0.90v1.4h-0.90zM14.0 60.2h0.90v1.4h-0.90zM20.0 60.2h0.90v1.4h-0.90zM4.0 62.2h0.90v1.4h-0.90zM7.0 62.2h0.90v1.4h-0.90zM13.0 62.2h0.90v1.4h-0.90zM15.0 62.2h0.90v1.4h-0.90zM22.0 62.2h0.90v1.4h-0.90zM28.0 62.2h0.90v1.4h-0.90zM48.4 62.2h0.90v1.4h-0.90zM54.4 62.2h0.90v1.4h-0.90zM57.4 62.2h0.90v1.4h-0.90zM8.0 64.2h0.90v1.4h-0.90zM23.0 64.2h0.90v1.4h-0.90zM31.0 64.2h0.90v1.4h-0.90zM45.0 64.2h0.90v1.4h-0.90zM46.0 64.2h0.90v1.4h-0.90zM58.0 64.2h0.45v1.4h-0.45zM69.4 64.2h0.90v1.4h-0.90zM73.4 64.2h0.90v1.4h-0.90zM0.0 66.2h0.90v1.4h-0.90zM3.0 66.2h0.90v1.4h-0.90zM4.3 68.2h0.90v1.4h-0.90zM5.3 68.2h0.90v1.4h-0.90zM12.3 68.2h0.90v1.4h-0.90zM13.3 70.2h0.90v1.4h-0.90zM28.0 70.2h0.90v1.4h-0.90zM30.0 70.2h0.90v1.4h-0.90zM4.3 72.2h0.90v1.4h-0.90zM5.3 72.2h0.90v1.4h-0.90zM8.8 84.2h0.90v1.4h-0.90zM9.8 84.2h0.90v1.4h-0.90zM14.8 84.2h0.90v1.4h-0.90zM7.6 94.2h0.36v1.4h-0.36zM1.0 96.2h0.90v1.4h-0.90zM13.0 96.2h0.90v1.4h-0.90zM14.0 96.2h0.90v1.4h-0.90zM18.0 96.2h0.90v1.4h-0.90zM19.0 96.2h0.90v1.4h-0.90zM5.0 98.2h0.90v1.4h-0.90zM6.0 98.2h0.90v1.4h-0.90zM10.0 98.2h0.90v1.4h-0.90zM11.0 98.2h0.90v1.4h-0.90zM13.0 98.2h0.90v1.4h-0.90zM27.0 98.2h0.90v1.4h-0.90zM31.0 98.2h0.90v1.4h-0.90zM39.0 98.2h0.90v1.4h-0.90zM46.0 98.2h0.90v1.4h-0.90zM48.0 98.2h0.90v1.4h-0.90zM53.0 98.2h0.90v1.4h-0.90zM58.0 98.2h0.90v1.4h-0.90zM73.0 98.2h0.90v1.4h-0.90zM4.0 100.2h0.90v1.4h-0.90zM7.0 100.2h0.90v1.4h-0.90zM14.0 100.2h0.90v1.4h-0.90zM19.0 100.2h0.90v1.4h-0.90zM26.0 100.2h0.90v1.4h-0.90zM31.0 100.2h0.90v1.4h-0.90zM34.0 100.2h0.90v1.4h-0.90zM36.0 100.2h0.90v1.4h-0.90zM51.0 100.2h0.90v1.4h-0.90zM54.0 100.2h0.90v1.4h-0.90zM55.0 100.2h0.90v1.4h-0.90zM61.0 100.2h0.90v1.4h-0.90zM65.0 100.2h0.90v1.4h-0.90zM70.0 100.2h0.90v1.4h-0.90zM74.0 100.2h0.90v1.4h-0.90zM0.0 102.2h0.90v1.4h-0.90zM3.0 102.2h0.90v1.4h-0.90zM6.0 102.2h0.90v1.4h-0.90zM10.0 102.2h0.90v1.4h-0.90zM12.0 102.2h0.90v1.4h-0.90zM13.0 102.2h0.90v1.4h-0.90zM14.0 102.2h0.90v1.4h-0.90zM15.0 102.2h0.90v1.4h-0.90zM0.0 104.2h0.90v1.4h-0.90zM7.0 104.2h0.90v1.4h-0.90zM11.0 104.2h0.90v1.4h-0.90zM21.0 104.2h0.90v1.4h-0.90zM44.4 104.2h0.90v1.4h-0.90zM47.4 104.2h0.90v1.4h-0.90zM52.4 104.2h0.90v1.4h-0.90zM56.4 104.2h0.90v1.4h-0.90zM59.4 104.2h0.81v1.4h-0.81zM11.4 108.2h0.90v1.4h-0.90zM17.4 108.2h0.90v1.4h-0.90zM20.4 108.2h0.90v1.4h-0.90zM22.0 112.2h0.90v1.4h-0.90zM23.0 112.2h0.90v1.4h-0.90zM24.0 112.2h0.90v1.4h-0.90zM16.4 114.2h0.90v1.4h-0.90zM18.4 114.2h0.90v1.4h-0.90zM21.4 122.2h0.90v1.4h-0.90zM29.4 122.2h0.90v1.4h-0.90zM31.4 122.2h0.90v1.4h-0.90zM33.4 122.2h0.90v1.4h-0.90zM22.0 126.2h0.90v1.4h-0.90zM31.0 126.2h0.90v1.4h-0.90zM16.4 128.2h0.90v1.4h-0.90zM17.4 128.2h0.90v1.4h-0.90zM19.4 128.2h0.90v1.4h-0.90zM8.4 132.2h0.90v1.4h-0.90zM16.4 132.2h0.90v1.4h-0.90zM17.4 132.2h0.90v1.4h-0.90zM26.4 132.2h0.90v1.4h-0.90zM30.4 132.2h0.90v1.4h-0.90zM23.0 136.2h0.90v1.4h-0.90zM25.0 136.2h0.90v1.4h-0.90zM26.0 136.2h0.90v1.4h-0.90zM31.0 136.2h0.36v1.4h-0.36zM9.0 146.2h0.90v1.4h-0.90zM16.0 146.2h0.90v1.4h-0.90zM20.0 146.2h0.90v1.4h-0.90zM22.0 146.2h0.90v1.4h-0.90zM13.0 152.2h0.90v1.4h-0.90zM14.0 152.2h0.90v1.4h-0.90zM6.0 158.2h0.90v1.4h-0.90zM22.0 158.2h0.90v1.4h-0.90zM4.0 160.2h0.90v1.4h-0.90zM8.0 160.2h0.90v1.4h-0.90zM10.0 160.2h0.90v1.4h-0.90zM12.0 160.2h0.90v1.4h-0.90zM16.0 160.2h0.90v1.4h-0.90zM2.0 164.2h0.90v1.4h-0.90zM6.0 164.2h0.90v1.4h-0.90zM0.0 168.2h0.90v1.4h-0.90zM2.0 168.2h0.90v1.4h-0.90zM6.0 168.2h0.90v1.4h-0.90zM8.0 170.2h0.90v1.4h-0.90zM4.0 174.2h0.90v1.4h-0.90zM5.0 174.2h0.90v1.4h-0.90zM1.0 176.2h0.90v1.4h-0.90zM3.0 176.2h0.90v1.4h-0.90zM4.0 176.2h0.90v1.4h-0.90zM17.0 176.2h0.90v1.4h-0.90zM20.0 176.2h0.90v1.4h-0.90zM21.0 176.2h0.90v1.4h-0.90zM23.0 176.2h0.90v1.4h-0.90zM27.0 176.2h0.90v1.4h-0.90zM0.0 178.2h0.90v1.4h-0.90zM4.0 178.2h0.90v1.4h-0.90zM6.0 178.2h0.90v1.4h-0.90zM9.0 178.2h0.90v1.4h-0.90zM14.0 178.2h0.90v1.4h-0.90zM19.0 178.2h0.90v1.4h-0.90zM31.0 178.2h0.90v1.4h-0.90zM47.0 178.2h0.90v1.4h-0.90zM55.0 178.2h0.90v1.4h-0.90zM62.0 178.2h0.90v1.4h-0.90zM65.0 178.2h0.90v1.4h-0.90zM69.0 178.2h0.90v1.4h-0.90zM0.0 180.2h0.90v1.4h-0.90zM36.0 180.2h0.90v1.4h-0.90zM46.0 180.2h0.90v1.4h-0.90zM47.0 180.2h0.90v1.4h-0.90zM55.0 180.2h0.90v1.4h-0.90zM57.0 180.2h0.90v1.4h-0.90zM61.0 180.2h0.90v1.4h-0.90zM67.0 180.2h0.90v1.4h-0.90zM74.0 180.2h0.90v1.4h-0.90zM9.0 182.2h0.90v1.4h-0.90zM21.0 184.2h0.90v1.4h-0.90zM26.0 184.2h0.90v1.4h-0.90zM41.0 184.2h0.90v1.4h-0.90zM42.0 184.2h0.90v1.4h-0.90zM46.0 184.2h0.90v1.4h-0.90zM50.0 184.2h0.90v1.4h-0.90zM51.0 184.2h0.90v1.4h-0.90zM56.0 184.2h0.90v1.4h-0.90zM8.0 186.2h0.90v1.4h-0.90zM10.0 186.2h0.90v1.4h-0.90zM11.0 186.2h0.90v1.4h-0.90zM18.0 188.2h0.90v1.4h-0.90zM16.0 190.2h0.90v1.4h-0.90zM21.0 192.2h0.90v1.4h-0.90zM25.0 192.2h0.90v1.4h-0.90zM9.0 194.2h0.90v1.4h-0.90zM11.0 194.2h0.90v1.4h-0.90zM13.0 194.2h0.90v1.4h-0.90zM17.0 194.2h0.90v1.4h-0.90zM18.0 194.2h0.90v1.4h-0.90zM20.0 194.2h0.90v1.4h-0.90zM18.2 196.2h0.90v1.4h-0.90zM23.2 196.2h0.90v1.4h-0.90zM25.2 196.2h0.90v1.4h-0.90zM38.2 196.2h0.90v1.4h-0.90zM39.2 196.2h0.90v1.4h-0.90zM9.4 204.2h0.90v1.4h-0.90zM21.4 204.2h0.90v1.4h-0.90zM25.4 204.2h0.90v1.4h-0.90zM31.4 204.2h0.90v1.4h-0.90zM16.2 206.2h0.90v1.4h-0.90zM19.2 206.2h0.90v1.4h-0.90zM24.2 206.2h0.90v1.4h-0.90zM25.2 206.2h0.90v1.4h-0.90zM12.0 208.2h0.90v1.4h-0.90zM14.0 208.2h0.90v1.4h-0.90zM18.0 208.2h0.90v1.4h-0.90zM19.0 208.2h0.90v1.4h-0.90zM32.0 208.2h0.90v1.4h-0.90zM37.0 208.2h0.90v1.4h-0.90zM38.0 208.2h0.63v1.4h-0.63zM8.0 210.2h0.90v1.4h-0.90zM18.0 210.2h0.90v1.4h-0.90zM20.2 212.2h0.90v1.4h-0.90zM10.0 218.2h0.90v1.4h-0.90zM16.0 218.2h0.90v1.4h-0.90zM8.0 220.2h0.90v1.4h-0.90zM9.0 220.2h0.90v1.4h-0.90zM17.0 220.2h0.90v1.4h-0.90zM19.0 220.2h0.90v1.4h-0.90zM21.0 220.2h0.90v1.4h-0.90zM25.0 220.2h0.90v1.4h-0.90zM27.0 220.2h0.90v1.4h-0.90zM29.0 220.2h0.54v1.4h-0.54zM18.2 222.2h0.90v1.4h-0.90zM21.2 222.2h0.90v1.4h-0.90zM27.2 222.2h0.90v1.4h-0.90zM9.0 224.2h0.90v1.4h-0.90zM17.0 224.2h0.90v1.4h-0.90zM19.0 224.2h0.90v1.4h-0.90zM28.0 224.2h0.90v1.4h-0.90zM37.0 224.2h0.63v1.4h-0.63zM21.0 226.2h0.90v1.4h-0.90zM24.0 226.2h0.90v1.4h-0.90zM19.2 228.2h0.90v1.4h-0.90zM24.2 228.2h0.90v1.4h-0.90zM26.2 228.2h0.90v1.4h-0.90zM35.2 228.2h0.72v1.4h-0.72zM11.0 234.2h0.90v1.4h-0.90zM12.0 236.2h0.90v1.4h-0.90zM20.0 236.2h0.90v1.4h-0.90zM24.0 236.2h0.90v1.4h-0.90zM25.0 236.2h0.90v1.4h-0.90zM16.2 238.2h0.90v1.4h-0.90zM17.2 238.2h0.90v1.4h-0.90zM20.2 238.2h0.90v1.4h-0.90zM21.2 238.2h0.90v1.4h-0.90zM22.2 238.2h0.90v1.4h-0.90zM19.0 240.2h0.90v1.4h-0.90zM26.0 240.2h0.90v1.4h-0.90zM28.0 240.2h0.90v1.4h-0.90zM9.0 242.2h0.90v1.4h-0.90zM14.0 242.2h0.90v1.4h-0.90zM15.0 242.2h0.90v1.4h-0.90zM16.2 244.2h0.90v1.4h-0.90zM21.2 244.2h0.90v1.4h-0.90zM25.2 244.2h0.90v1.4h-0.90zM28.2 244.2h0.90v1.4h-0.90zM32.2 244.2h0.90v1.4h-0.90zM9.8 250.2h0.90v1.4h-0.90zM12.8 250.2h0.90v1.4h-0.90zM5.8 252.2h0.90v1.4h-0.90zM16.8 252.2h0.90v1.4h-0.90zM27.0 252.2h0.90v1.4h-0.90zM30.0 252.2h0.90v1.4h-0.90zM32.0 252.2h0.90v1.4h-0.90z"/>
<path fill="#9cdcfe" fill-opacity="0.7" d="M0.0 34.2h0.90v1.4h-0.90zM2.0 34.2h0.90v1.4h-0.90zM6.0 34.2h0.54v1.4h-0.54zM3.9 74.2h0.90v1.4h-0.90zM4.9 74.2h0.90v1.4h-0.90zM7.9 74.2h0.90v1.4h-0.90zM8.9 74.2h0.72v1.4h-0.72zM11.5 74.2h0.90v1.4h-0.90zM12.5 74.2h0.90v1.4h-0.90zM7.6 76.2h0.90v1.4h-0.90zM10.0 78.2h0.90v1.4h-0.90zM12.0 78.2h0.90v1.4h-0.90zM14.0 78.2h0.90v1.4h-0.90zM21.0 78.2h0.90v1.4h-0.90zM22.0 78.2h0.90v1.4h-0.90zM23.0 78.2h0.90v1.4h-0.90zM25.0 78.2h0.90v1.4h-0.90zM9.0 80.2h0.90v1.4h-0.90zM10.0 80.2h0.90v1.4h-0.90zM12.0 80.2h0.90v1.4h-0.90zM13.0 80.2h0.72v1.4h-0.72zM4.0 106.2h0.90v1.4h-0.90zM5.0 106.2h0.90v1.4h-0.90zM8.0 106.2h0.90v1.4h-0.90zM9.0 106.2h0.90v1.4h-0.90zM10.0 106.2h0.90v1.4h-0.90zM8.0 110.2h0.90v1.4h-0.90zM11.0 110.2h0.90v1.4h-0.90zM16.0 110.2h0.90v1.4h-0.90zM19.2 110.2h0.90v1.4h-0.90zM20.2 110.2h0.90v1.4h-0.90zM21.2 110.2h0.90v1.4h-0.90zM23.2 110.2h0.90v1.4h-0.90zM24.2 110.2h0.90v1.4h-0.90zM25.2 110.2h0.90v1.4h-0.90zM4.0 120.2h0.90v1.4h-0.90zM5.0 120.2h0.90v1.4h-0.90zM6.0 120.2h0.90v1.4h-0.90zM8.0 120.2h0.90v1.4h-0.90zM10.0 120.2h0.90v1.4h-0.90zM9.0 124.2h0.90v1.4h-0.90zM11.0 124.2h0.90v1.4h-0.90zM12.0 124.2h0.90v1.4h-0.90zM14.0 124.2h0.90v1.4h-0.90zM15.0 124.2h0.90v1.4h-0.90zM20.2 124.2h0.90v1.4h-0.90zM21.2 124.2h0.90v1.4h-0.90zM25.2 124.2h0.90v1.4h-0.90zM8.0 134.2h0.90v1.4h-0.90zM9.0 134.2h0.90v1.4h-0.90zM10.0 134.2h0.90v1.4h-0.90zM11.0 134.2h0.90v1.4h-0.90zM13.0 134.2h0.90v1.4h-0.90zM14.0 134.2h0.90v1.4h-0.90zM16.0 134.2h0.90v1.4h-0.90zM20.2 134.2h0.90v1.4h-0.90zM21.2 134.2h0.90v1.4h-0.90zM22.2 134.2h0.90v1.4h-0.90zM24.2 134.2h0.90v1.4h-0.90zM26.2 134.2h0.72v1.4h-0.72zM3.0 144.2h0.90v1.4h-0.90zM4.0 144.2h0.90v1.4h-0.90zM5.0 144.2h0.90v1.4h-0.90zM6.0 144.2h0.90v1.4h-0.90zM9.0 144.2h0.90v1.4h-0.90zM8.0 148.2h0.90v1.4h-0.90zM9.0 148.2h0.90v1.4h-0.90zM10.0 148.2h0.90v1.4h-0.90zM11.0 148.2h0.90v1.4h-0.90zM12.0 148.2h0.90v1.4h-0.90zM13.0 148.2h0.90v1.4h-0.90zM15.0 148.2h0.90v1.4h-0.90zM20.0 148.2h0.90v1.4h-0.90zM21.0 148.2h0.90v1.4h-0.90zM22.0 148.2h0.90v1.4h-0.90zM24.0 148.2h0.90v1.4h-0.90zM25.0 148.2h0.90v1.4h-0.90zM26.0 148.2h0.90v1.4h-0.90zM0.0 166.2h0.90v1.4h-0.90zM1.0 166.2h0.90v1.4h-0.90zM2.0 166.2h0.90v1.4h-0.90zM4.0 166.2h0.90v1.4h-0.90zM6.0 166.2h0.90v1.4h-0.90zM7.0 166.2h0.90v1.4h-0.90zM31.0 184.2h0.90v1.4h-0.90zM34.0 184.2h0.90v1.4h-0.90zM35.0 184.2h0.90v1.4h-0.90zM37.0 184.2h0.90v1.4h-0.90z"/>
<path fill="#9cdcfe" fill-opacity="0.5" d="M1.0 34.2h0.90v1.4h-0.90zM3.0 34.2h0.90v1.4h-0.90zM4.0 34.2h0.90v1.4h-0.90zM5.0 34.2h0.90v1.4h-0.90zM5.9 74.2h0.90v1.4h-0.90zM6.9 74.2h0.90v1.4h-0.90zM13.5 74.2h0.72v1.4h-0.72zM6.6 76.2h0.90v1.4h-0.90zM8.6 76.2h0.90v1.4h-0.90zM9.6 76.2h0.54v1.4h-0.54zM8.0 78.2h0.90v1.4h-0.90zM9.0 78.2h0.90v1.4h-0.90zM11.0 78.2h0.90v1.4h-0.90zM13.0 78.2h0.90v1.4h-0.90zM15.0 78.2h0.90v1.4h-0.90zM19.0 78.2h0.90v1.4h-0.90zM20.0 78.2h0.90v1.4h-0.90zM24.0 78.2h0.90v1.4h-0.90zM26.0 78.2h0.90v1.4h-0.90zM8.0 80.2h0.90v1.4h-0.90zM11.0 80.2h0.90v1.4h-0.90zM3.0 106.2h0.90v1.4h-0.90zM6.0 106.2h0.90v1.4h-0.90zM7.0 106.2h0.90v1.4h-0.90zM9.0 110.2h0.90v1.4h-0.90zM10.0 110.2h0.90v1.4h-0.90zM12.0 110.2h0.90v1.4h-0.90zM13.0 110.2h0.90v1.4h-0.90zM14.0 110.2h0.90v1.4h-0.90zM15.0 110.2h0.90v1.4h-0.90zM22.2 110.2h0.90v1.4h-0.90zM26.2 110.2h0.72v1.4h-0.72zM3.0 120.2h0.90v1.4h-0.90zM7.0 120.2h0.90v1.4h-0.90zM9.0 120.2h0.90v1.4h-0.90zM8.0 124.2h0.90v1.4h-0.90zM10.0 124.2h0.90v1.4h-0.90zM13.0 124.2h0.90v1.4h-0.90zM16.0 124.2h0.90v1.4h-0.90zM19.2 124.2h0.90v1.4h-0.90zM22.2 124.2h0.90v1.4h-0.90zM23.2 124.2h0.90v1.4h-0.90zM24.2 124.2h0.90v1.4h-0.90zM26.2 124.2h0.72v1.4h-0.72zM12.0 134.2h0.90v1.4h-0.90zM15.0 134.2h0.90v1.4h-0.90zM19.2 134.2h0.90v1.4h-0.90zM23.2 134.2h0.90v1.4h-0.90zM25.2 134.2h0.90v1.4h-0.90zM7.0 144.2h0.90v1.4h-0.90zM8.0 144.2h0.90v1.4h-0.90zM10.0 144.2h0.90v1.4h-0.90zM14.0 148.2h0.90v1.4h-0.90zM19.0 148.2h0.90v1.4h-0.90zM23.0 148.2h0.90v1.4h-0.90zM3.0 166.2h0.90v1.4h-0.90zM5.0 166.2h0.90v1.4h-0.90zM32.0 184.2h0.90v1.4h-0.90zM33.0 184.2h0.90v1.4h-0.90zM36.0 184.2h0.90v1.4h-0.90zM38.0 184.2h0.90v1.4h-0.90z"/>
<path fill="#d4d4d4" fill-opacity="0.7" d="M7.0 34.2h0.90v1.4h-0.90zM16.5 36.2h0.81v1.4h-0.81zM22.0 36.2h0.90v1.4h-0.90zM6.0 66.2h0.54v1.4h-0.54zM15.0 74.2h0.90v1.4h-0.90zM28.0 78.2h0.90v1.4h-0.90zM12.5 106.2h0.90v1.4h-0.90zM18.0 110.2h0.54v1.4h-0.54zM28.0 110.2h0.54v1.4h-0.54zM18.0 124.2h0.54v1.4h-0.54zM28.0 124.2h0.54v1.4h-0.54zM18.0 134.2h0.54v1.4h-0.54zM28.0 146.2h0.90v1.4h-0.90zM17.0 160.2h0.90v1.4h-0.90zM14.0 168.2h0.90v1.4h-0.90zM16.0 168.2h0.90v1.4h-0.90zM17.0 168.2h0.90v1.4h-0.90zM18.0 168.2h0.90v1.4h-0.90zM19.0 168.2h0.90v1.4h-0.90zM20.0 168.2h0.90v1.4h-0.90zM23.0 168.2h0.90v1.4h-0.90zM24.0 168.2h0.90v1.4h-0.90zM25.0 168.2h0.90v1.4h-0.90zM26.0 168.2h0.90v1.4h-0.90zM41.0 168.2h0.90v1.4h-0.90zM42.0 168.2h0.90v1.4h-0.90zM43.0 168.2h0.90v1.4h-0.90zM46.0 168.2h0.90v1.4h-0.90zM16.0 170.2h0.90v1.4h-0.90zM20.0 186.2h0.90v1.4h-0.90z"/>
<path fill="#d4d4d4" fill-opacity="0.5" d="M8.0 34.2h0.90v1.4h-0.90zM8.0 36.2h0.90v1.4h-0.90zM10.6 74.2h0.36v1.4h-0.36zM11.5 76.2h0.45v1.4h-0.45zM17.4 78.2h0.54v1.4h-0.54zM14.7 80.2h0.54v1.4h-0.54zM12.5 120.2h0.90v1.4h-0.90zM28.0 134.2h0.54v1.4h-0.54zM12.5 144.2h0.90v1.4h-0.90zM17.0 148.2h0.90v1.4h-0.90zM28.0 148.2h0.90v1.4h-0.90zM16.0 158.2h0.90v1.4h-0.90zM9.0 166.2h0.90v1.4h-0.90zM13.0 168.2h0.90v1.4h-0.90zM21.0 168.2h0.90v1.4h-0.90zM22.0 168.2h0.90v1.4h-0.90zM44.0 168.2h0.90v1.4h-0.90zM45.0 168.2h0.90v1.4h-0.90zM36.0 188.2h0.90v1.4h-0.90z"/>
<path fill="#569cd6" fill-opacity="0.5" d="M0.0 36.2h0.90v1.4h-0.90zM1.0 36.2h0.90v1.4h-0.90zM4.0 36.2h0.90v1.4h-0.90zM27.6 46.2h0.90v1.4h-0.90zM28.6 46.2h0.36v1.4h-0.36zM31.0 62.2h0.90v1.4h-0.90zM33.0 62.2h0.90v1.4h-0.90zM37.0 62.2h0.90v1.4h-0.90zM40.0 62.2h0.45v1.4h-0.45zM59.5 64.2h0.90v1.4h-0.90zM65.5 64.2h0.90v1.4h-0.90zM67.5 64.2h0.90v1.4h-0.90zM18.0 68.2h0.90v1.4h-0.90zM19.0 68.2h0.90v1.4h-0.90zM21.0 70.2h0.90v1.4h-0.90zM24.0 70.2h0.90v1.4h-0.90zM4.0 84.2h0.90v1.4h-0.90zM5.0 84.2h0.90v1.4h-0.90zM6.0 84.2h0.90v1.4h-0.90zM7.0 84.2h0.90v1.4h-0.90zM29.2 104.2h0.90v1.4h-0.90zM30.2 104.2h0.90v1.4h-0.90zM35.2 104.2h0.90v1.4h-0.90zM11.0 112.2h0.90v1.4h-0.90zM13.0 112.2h0.72v1.4h-0.72zM8.0 114.2h0.90v1.4h-0.90zM9.0 114.2h0.90v1.4h-0.90zM8.0 126.2h0.90v1.4h-0.90zM10.0 126.2h0.90v1.4h-0.90zM11.0 126.2h0.90v1.4h-0.90zM8.0 128.2h0.90v1.4h-0.90zM9.0 128.2h0.90v1.4h-0.90zM10.0 136.2h0.90v1.4h-0.90zM13.0 136.2h0.72v1.4h-0.72zM9.0 138.2h0.90v1.4h-0.90zM11.0 138.2h0.90v1.4h-0.90zM11.0 150.2h0.90v1.4h-0.90zM9.0 152.2h0.90v1.4h-0.90zM11.0 152.2h0.90v1.4h-0.90zM17.0 158.2h0.90v1.4h-0.90zM18.0 160.2h0.90v1.4h-0.90zM19.0 160.2h0.90v1.4h-0.90zM20.0 160.2h0.90v1.4h-0.90zM29.0 168.2h0.90v1.4h-0.90zM29.0 184.2h0.90v1.4h-0.90zM39.0 184.2h0.90v1.4h-0.90zM5.0 186.2h0.90v1.4h-0.90zM9.0 190.2h0.90v1.4h-0.90zM11.0 190.2h0.90v1.4h-0.90zM12.0 190.2h0.90v1.4h-0.90zM8.0 196.2h0.90v1.4h-0.90zM3.0 202.2h0.90v1.4h-0.90zM5.0 202.2h0.90v1.4h-0.90zM10.0 206.2h0.90v1.4h-0.90zM11.0 206.2h0.90v1.4h-0.90zM8.0 212.2h0.90v1.4h-0.90zM9.0 212.2h0.90v1.4h-0.90zM13.0 212.2h0.72v1.4h-0.72zM5.0 218.2h0.90v1.4h-0.90zM8.0 222.2h0.90v1.4h-0.90zM12.0 222.2h0.90v1.4h-0.90zM11.0 228.2h0.90v1.4h-0.90zM13.0 228.2h0.72v1.4h-0.72zM3.0 234.2h0.90v1.4h-0.90zM8.0 238.2h0.90v1.4h-0.90zM10.0 238.2h0.90v1.4h-0.90zM11.0 238.2h0.90v1.4h-0.90zM12.0 238.2h0.90v1.4h-0.90zM13.0 238.2h0.72v1.4h-0.72zM8.0 244.2h0.90v1.4h-0.90zM22.0 252.2h0.90v1.4h-0.90zM23.0 252.2h0.90v1.4h-0.90z"/>
<path fill="#569cd6" fill-opacity="0.7" d="M2.0 36.2h0.45v1.4h-0.45zM3.0 36.2h0.90v1.4h-0.90zM5.0 36.2h0.90v1.4h-0.90zM24.6 46.2h0.90v1.4h-0.90zM25.6 46.2h0.90v1.4h-0.90zM26.6 46.2h0.90v1.4h-0.90zM29.0 62.2h0.90v1.4h-0.90zM30.0 62.2h0.90v1.4h-0.90zM32.0 62.2h0.90v1.4h-0.90zM34.0 62.2h0.90v1.4h-0.90zM35.0 62.2h0.90v1.4h-0.90zM36.0 62.2h0.90v1.4h-0.90zM38.0 62.2h0.90v1.4h-0.90zM39.0 62.2h0.90v1.4h-0.90zM58.5 64.2h0.90v1.4h-0.90zM60.5 64.2h0.90v1.4h-0.90zM61.5 64.2h0.90v1.4h-0.90zM62.5 64.2h0.90v1.4h-0.90zM63.5 64.2h0.90v1.4h-0.90zM64.5 64.2h0.90v1.4h-0.90zM66.5 64.2h0.90v1.4h-0.90zM68.5 64.2h0.81v1.4h-0.81zM17.0 68.2h0.90v1.4h-0.90zM20.0 68.2h0.90v1.4h-0.90zM22.0 70.2h0.90v1.4h-0.90zM23.0 70.2h0.90v1.4h-0.90zM31.2 104.2h0.90v1.4h-0.90zM32.2 104.2h0.90v1.4h-0.90zM33.2 104.2h0.90v1.4h-0.90zM34.2 104.2h0.90v1.4h-0.90zM36.2 104.2h0.90v1.4h-0.90zM37.2 104.2h0.90v1.4h-0.90zM38.2 104.2h0.90v1.4h-0.90zM39.2 104.2h0.90v1.4h-0.90zM8.0 112.2h0.90v1.4h-0.90zM9.0 112.2h0.90v1.4h-0.90zM10.0 112.2h0.90v1.4h-0.90zM12.0 112.2h0.90v1.4h-0.90zM10.0 114.2h0.90v1.4h-0.90zM11.0 114.2h0.90v1.4h-0.90zM9.0 126.2h0.90v1.4h-0.90zM12.0 126.2h0.90v1.4h-0.90zM13.0 126.2h0.72v1.4h-0.72zM10.0 128.2h0.90v1.4h-0.90zM11.0 128.2h0.90v1.4h-0.90zM8.0 136.2h0.90v1.4h-0.90zM9.0 136.2h0.90v1.4h-0.90zM11.0 136.2h0.90v1.4h-0.90zM12.0 136.2h0.90v1.4h-0.90zM8.0 138.2h0.90v1.4h-0.90zM10.0 138.2h0.90v1.4h-0.90zM8.0 150.2h0.90v1.4h-0.90zM9.0 150.2h0.90v1.4h-0.90zM10.0 150.2h0.90v1.4h-0.90zM12.0 150.2h0.90v1.4h-0.90zM13.0 150.2h0.90v1.4h-0.90zM8.0 152.2h0.90v1.4h-0.90zM10.0 152.2h0.90v1.4h-0.90zM18.0 158.2h0.90v1.4h-0.90zM19.0 158.2h0.90v1.4h-0.90zM20.0 158.2h0.90v1.4h-0.90zM21.0 160.2h0.90v1.4h-0.90zM28.0 168.2h0.90v1.4h-0.90zM18.0 170.2h0.90v1.4h-0.90zM19.0 170.2h0.90v1.4h-0.90zM30.0 184.2h0.90v1.4h-0.90zM40.0 184.2h0.90v1.4h-0.90zM3.0 186.2h0.90v1.4h-0.90zM4.0 186.2h0.90v1.4h-0.90zM8.0 190.2h0.90v1.4h-0.90zM10.0 190.2h0.90v1.4h-0.90zM13.0 190.2h0.90v1.4h-0.90zM9.0 196.2h0.90v1.4h-0.90zM10.0 196.2h0.90v1.4h-0.90zM11.0 196.2h0.90v1.4h-0.90zM12.0 196.2h0.90v1.4h-0.90zM13.0 196.2h0.72v1.4h-0.72zM4.0 202.2h0.90v1.4h-0.90zM8.0 206.2h0.90v1.4h-0.90zM9.0 206.2h0.90v1.4h-0.90zM12.0 206.2h0.90v1.4h-0.90zM13.0 206.2h0.72v1.4h-0.72zM10.0 212.2h0.90v1.4h-0.90zM11.0 212.2h0.90v1.4h-0.90zM12.0 212.2h0.90v1.4h-0.90zM3.0 218.2h0.90v1.4h-0.90zM4.0 218.2h0.90v1.4h-0.90zM9.0 222.2h0.90v1.4h-0.90zM10.0 222.2h0.90v1.4h-0.90zM11.0 222.2h0.90v1.4h-0.90zM13.0 222.2h0.72v1.4h-0.72zM8.0 228.2h0.90v1.4h-0.90zM9.0 228.2h0.90v1.4h-0.90zM10.0 228.2h0.90v1.4h-0.90zM12.0 228.2h0.90v1.4h-0.90zM4.0 234.2h0.90v1.4h-0.90zM5.0 234.2h0.90v1.4h-0.90zM9.0 238.2h0.90v1.4h-0.90zM9.0 244.2h0.90v1.4h-0.90zM10.0 244.2h0.90v1.4h-0.90zM11.0 244.2h0.90v1.4h-0.90zM12.0 244.2h0.90v1.4h-0.90zM13.0 244.2h0.72v1.4h-0.72zM17.9 250.2h0.90v1.4h-0.90zM18.9 250.2h0.90v1.4h-0.90zM19.9 250.2h0.90v1.4h-0.90zM20.9 250.2h0.90v1.4h-0.90zM21.0 252.2h0.90v1.4h-0.90zM24.0 252.2h0.90v1.4h-0.90z"/>
<path fill="#b5cea8" fill-opacity="0.5" d="M9.7 36.2h0.90v1.4h-0.90zM13.7 36.2h0.90v1.4h-0.90zM19.0 36.2h0.90v1.4h-0.90zM20.0 36.2h0.90v1.4h-0.90zM21.0 36.2h0.45v1.4h-0.45zM23.5 36.2h0.90v1.4h-0.90zM13.0 76.2h0.90v1.4h-0.90zM30.0 78.2h0.90v1.4h-0.90zM30.0 110.2h0.90v1.4h-0.90zM30.0 124.2h0.90v1.4h-0.90zM30.0 134.2h0.90v1.4h-0.90zM11.0 166.2h0.90v1.4h-0.90z"/>
<path fill="#b5cea8" fill-opacity="0.7" d="M10.7 36.2h0.90v1.4h-0.90zM11.7 36.2h0.90v1.4h-0.90zM12.7 36.2h0.90v1.4h-0.90zM14.7 36.2h0.81v1.4h-0.81zM18.0 36.2h0.90v1.4h-0.90zM24.5 36.2h0.90v1.4h-0.90zM25.5 36.2h0.45v1.4h-0.45zM15.6 80.2h0.81v1.4h-0.81zM15.0 106.2h0.90v1.4h-0.90zM15.0 120.2h0.90v1.4h-0.90zM15.0 144.2h0.90v1.4h-0.90zM30.0 148.2h0.90v1.4h-0.90zM12.0 166.2h0.90v1.4h-0.90z"/>
<path fill="#f08a40" fill-opacity="0.7" d="M0.0 48.2h0.90v1.4h-0.90zM2.0 48.2h0.90v1.4h-0.90zM3.0 48.2h0.90v1.4h-0.90zM4.0 48.2h0.72v1.4h-0.72zM5.7 48.2h0.90v1.4h-0.90zM6.7 48.2h0.90v1.4h-0.90zM7.7 48.2h0.90v1.4h-0.90zM8.7 48.2h0.90v1.4h-0.90zM10.7 48.2h0.90v1.4h-0.90z"/>
<path fill="#f08a40" fill-opacity="0.5" d="M1.0 48.2h0.90v1.4h-0.90zM9.7 48.2h0.90v1.4h-0.90z"/>
<path fill="#c586c0" fill-opacity="0.5" d="M1.0 70.2h0.90v1.4h-0.90zM2.0 70.2h0.90v1.4h-0.90zM0.0 72.2h0.90v1.4h-0.90zM2.0 72.2h0.90v1.4h-0.90zM5.0 82.2h0.90v1.4h-0.90zM6.0 82.2h0.90v1.4h-0.90zM5.0 116.2h0.90v1.4h-0.90zM1.0 118.2h0.90v1.4h-0.90zM2.0 118.2h0.90v1.4h-0.90zM0.0 120.2h0.90v1.4h-0.90zM1.0 120.2h0.90v1.4h-0.90zM4.0 122.2h0.90v1.4h-0.90zM4.0 130.2h0.90v1.4h-0.90zM5.0 130.2h0.90v1.4h-0.90zM6.0 130.2h0.90v1.4h-0.90zM5.0 132.2h0.90v1.4h-0.90zM6.0 132.2h0.90v1.4h-0.90zM5.0 140.2h0.90v1.4h-0.90zM5.0 154.2h0.90v1.4h-0.90zM0.0 158.2h0.90v1.4h-0.90zM2.0 158.2h0.90v1.4h-0.90zM0.0 160.2h0.90v1.4h-0.90zM2.0 160.2h0.90v1.4h-0.90zM0.0 164.2h0.90v1.4h-0.90zM1.0 170.2h0.90v1.4h-0.90zM1.0 186.2h0.90v1.4h-0.90zM4.0 188.2h0.90v1.4h-0.90zM5.0 188.2h0.90v1.4h-0.90zM6.0 188.2h0.90v1.4h-0.90zM4.0 198.2h0.90v1.4h-0.90zM5.0 198.2h0.90v1.4h-0.90zM0.0 200.2h0.90v1.4h-0.90zM1.0 200.2h0.90v1.4h-0.90zM2.0 200.2h0.90v1.4h-0.90zM5.0 204.2h0.90v1.4h-0.90zM6.0 204.2h0.90v1.4h-0.90zM5.0 214.2h0.90v1.4h-0.90zM0.0 216.2h0.90v1.4h-0.90zM5.0 220.2h0.90v1.4h-0.90zM4.0 230.2h0.90v1.4h-0.90zM1.0 232.2h0.90v1.4h-0.90zM5.0 236.2h0.90v1.4h-0.90zM6.0 236.2h0.90v1.4h-0.90zM5.0 246.2h0.90v1.4h-0.90zM0.0 250.2h0.90v1.4h-0.90z"/>
</svg></div>
<div id="vscroll"></div><div id="slider"></div><div id="marker"></div>
<div id="shadow"></div>
<div id="crumbs">
<span class="bc" style="left:-2.3px;top:1.2px">:</span>
<svg class="chev" style="left:8px" width="9" height="12" viewBox="0 0 9 12"><path d="M1.2 0.8L6.9 6L1.2 11.2" stroke="#c4c4c4" stroke-width="1.3" fill="none"/></svg>
<span class="bc" style="left:21.3px">Project</span>
<svg class="chev" style="left:75px" width="9" height="12" viewBox="0 0 9 12"><path d="M1.2 0.8L6.9 6L1.2 11.2" stroke="#c4c4c4" stroke-width="1.3" fill="none"/></svg>
<span class="bc" style="left:88px">Qsp</span>
<svg class="chev" style="left:122px" width="9" height="12" viewBox="0 0 9 12"><path d="M1.2 0.8L6.9 6L1.2 11.2" stroke="#c4c4c4" stroke-width="1.3" fill="none"/></svg>
<span class="bc" style="left:135px">QspSyntax</span>
<svg class="chev" style="left:213px" width="9" height="12" viewBox="0 0 9 12"><path d="M1.2 0.8L6.9 6L1.2 11.2" stroke="#c4c4c4" stroke-width="1.3" fill="none"/></svg>
<span class="bc" style="left:226px;letter-spacing:0.38px">sample-code</span>
<svg class="chev" style="left:321px" width="9" height="12" viewBox="0 0 9 12"><path d="M1.2 0.8L6.9 6L1.2 11.2" stroke="#c4c4c4" stroke-width="1.3" fill="none"/></svg>
<svg style="position:absolute;left:343px;top:7px" width="12" height="12" viewBox="0 0 12 12"><rect x="0" y="0" width="11" height="2" fill="#cfcfcf"/><rect x="0" y="3" width="7" height="2" fill="#cfcfcf"/><rect x="0" y="6" width="11" height="2" fill="#cfcfcf"/><rect x="0" y="9" width="9" height="2" fill="#cfcfcf"/></svg>
<span class="bc" style="left:361px">Sandbox.qsps</span>
</div>
</body></html>
